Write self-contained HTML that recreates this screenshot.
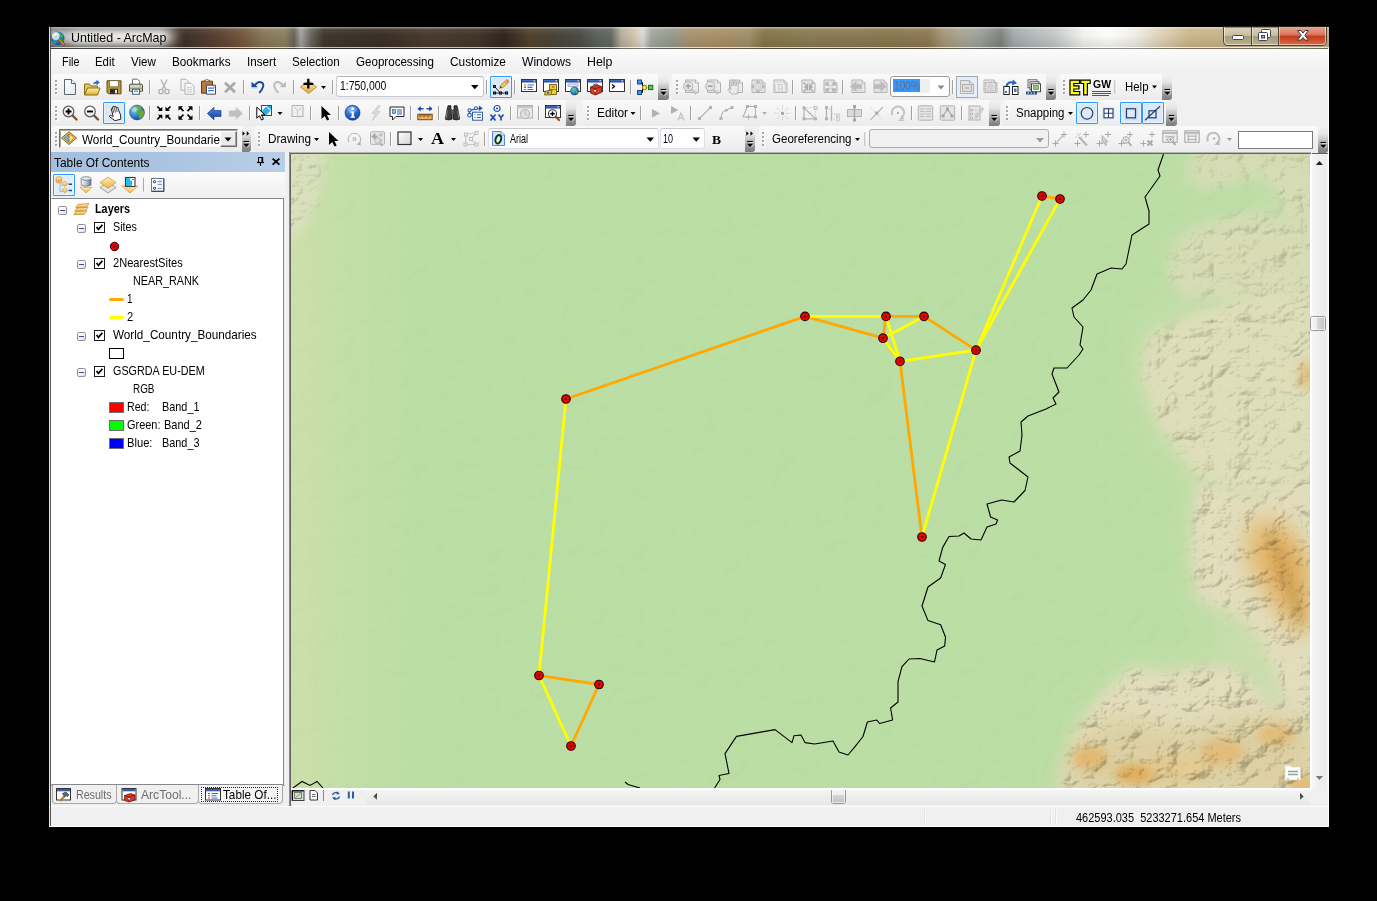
<!DOCTYPE html>
<html><head><meta charset="utf-8"><title>Untitled - ArcMap</title>
<style>
html,body{margin:0;padding:0;background:#000;}
body{width:1377px;height:901px;position:relative;overflow:hidden;font-family:"Liberation Sans",sans-serif;font-size:12px;color:#000;}
.a{position:absolute;}
.t{position:absolute;white-space:pre;transform-origin:0 0;line-height:1;}
svg{position:absolute;overflow:visible;}

</style></head>
<body>
<div class="a" style="left:49px;top:27px;width:1280px;height:800px;background:#f0f0f0;"></div>
<div class="a" style="left:49px;top:27px;width:1px;height:800px;background:#e8e8e8;z-index:5;"></div><div class="a" style="left:50px;top:27px;width:1px;height:799px;background:#555;z-index:5;"></div>
<div class="a" style="left:1328px;top:48px;width:1px;height:779px;background:#fff;z-index:5;"></div><div class="a" style="left:49px;top:826px;width:1280px;height:1px;background:#fff;z-index:5;"></div>
<div class="a" style="left:49px;top:27px;width:1280px;height:22px;overflow:hidden;background:linear-gradient(90deg,#1c1a18 0px,#2a2622 8px,#3a332c 60px,#3c3128 135px,#5a4232 168px,#74563c 192px,#8a7858 215px,#8c8060 236px,#6a6458 245px,#a4a4a0 252px,#6a665c 262px,#40382e 275px,#3a3026 330px,#4a3c2e 380px,#42362a 430px,#30261e 455px,#54422c 480px,#4a4438 505px,#4c4c46 530px,#5c625e 548px,#626862 562px,#b4ae9a 572px,#d2c6ac 585px,#dcdcd6 594px,#a2a8a0 602px,#98998c 625px,#a89470 640px,#aa9068 670px,#a09068 700px,#86764a 715px,#8a7c54 760px,#8c7a52 800px,#8a7850 840px,#8e7a54 880px,#a89878 895px,#a8a698 915px,#a0a29a 930px,#7e8480 952px,#a4acac 965px,#b4bcbc 985px,#c4c8c6 1005px,#f2f2ee 1035px,#fcfcfa 1060px,#f0eee6 1085px,#e0d4b8 1110px,#ccb88c 1140px,#c8b48a 1175px,#d0c4a0 1230px,#b8b090 1280px);">
<div class="a" style="left:0;top:0;width:1280px;height:22px;z-index:2;background:linear-gradient(180deg,rgba(255,255,255,.4) 0,rgba(255,255,255,.4) 1px,rgba(255,255,255,.08) 2px,rgba(0,0,0,0) 8px,rgba(0,0,0,.10) 20px,rgba(255,255,255,.7) 20px,rgba(255,255,255,.7) 21px,rgba(30,30,30,.5) 21px,rgba(30,30,30,.5) 22px);"></div>
<div class="a" style="left:-8px;top:1px;width:134px;height:18px;background:#fff;border-radius:9px;filter:blur(6px);opacity:.8;"></div>
<div class="a" style="left:21px;top:5px;width:96px;height:12px;background:#fff;border-radius:6px;filter:blur(3px);opacity:.7;"></div></div>
<svg style="left:50px;top:29px;z-index:3" width="17" height="18" viewBox="0 0 17 18">
<defs><radialGradient id="gl" cx=".4" cy=".35" r=".75"><stop offset="0" stop-color="#6cc4f0"/><stop offset=".55" stop-color="#1e78c4"/><stop offset="1" stop-color="#0a3c7c"/></radialGradient>
<radialGradient id="gl2" cx=".4" cy=".35" r=".7"><stop offset="0" stop-color="#f4fcff"/><stop offset="1" stop-color="#9cd8f4"/></radialGradient></defs>
<circle cx="7.600" cy="9.400" r="6.900" fill="url(#gl)"/>
<path d="M9 3.500 Q12 4 13.500 7 Q13 9 11.500 9 Q10 8 10 6 Q8.500 5 9 3.500Z M9.500 10 Q12 9.500 13.800 11 Q13 14 10.500 15.500 Q9.500 13 9.500 10Z M3 12.500 Q5 12 6 13.500 Q5.500 15.500 4 15Z" fill="#3cae38"/>
<path d="M8.300 9.700 L13.800 15.400" stroke="#6a3c10" stroke-width="2.600" stroke-linecap="round"/><path d="M8.500 9.900 L13.700 15.300" stroke="#e08a34" stroke-width="1.500" stroke-linecap="round"/>
<circle cx="5.800" cy="7" r="3.500" fill="url(#gl2)" stroke="#e8e8e8" stroke-width="1.300"/>
<circle cx="5.800" cy="7" r="4.200" fill="none" stroke="#56606c" stroke-width=".5"/>
<path d="M4 8 Q5.500 8.500 7 7" stroke="#7cd060" stroke-width="1" fill="none" opacity=".8"/>
</svg>
<span class="t" style="left:70.5px;top:31.70px;font-size:12.4px;transform:scaleX(1.0042);z-index:3;">Untitled - ArcMap</span>
<svg style="left:1222px;top:27px;z-index:3" width="106" height="20" viewBox="0 0 106 20">
<defs>
<linearGradient id="cb1" x1="0" y1="0" x2="0" y2="1"><stop offset="0" stop-color="#ddd6c0"/><stop offset=".48" stop-color="#c6bc9e"/><stop offset=".5" stop-color="#a89c78"/><stop offset="1" stop-color="#b8b090"/></linearGradient>
<linearGradient id="cb2" x1="0" y1="0" x2="0" y2="1"><stop offset="0" stop-color="#e9a890"/><stop offset=".45" stop-color="#d8735a"/><stop offset=".5" stop-color="#c4391c"/><stop offset="1" stop-color="#d86a40"/></linearGradient>
</defs>
<path d="M1.5 0 H104.5 V14.5 Q104.5 18.5 100.5 18.5 H5.5 Q1.5 18.5 1.5 14.5 Z" fill="url(#cb1)" stroke="#4a4436" stroke-width="1"/>
<path d="M57 0 H104 V14.5 Q104 18 100.5 18 H57 Z" fill="url(#cb2)"/>
<path d="M2.5 0 V14.5 Q2.5 17.5 5.5 17.5 H100.5 Q103.5 17.5 103.5 14.5 V0" fill="none" stroke="rgba(255,255,255,.55)" stroke-width="1"/>
<path d="M29.5 0 V18 M56.5 0 V18" stroke="#4a4436" stroke-width="1"/>
<path d="M30.5 0 V17 M57.5 0 V17" stroke="rgba(255,255,255,.45)" stroke-width="1"/>
<rect x="10.5" y="8.5" width="11" height="4" rx="1" fill="#fff" stroke="#3e4458" stroke-width="1"/>
<g fill="none" stroke="#3e4458" stroke-width="1"><rect x="39.5" y="2.5" width="9" height="8" rx="1" fill="#fff"/><rect x="36.5" y="5.5" width="9" height="8" rx="1" fill="#fff"/><rect x="39.5" y="8.5" width="3" height="2.500" fill="#b0a88c"/></g>
<path d="M75.500 3.500 h3.500 l2 2.600 l2-2.600 h3.500 l-3.700 4.800 l3.700 4.800 h-3.500 l-2-2.600 l-2 2.600 h-3.500 l3.700-4.800 z" fill="#fff" stroke="#3e3a4a" stroke-width="1" stroke-linejoin="round"/>
</svg>
<div class="a" style="left:51px;top:49px;width:1277px;height:24px;background:linear-gradient(180deg,#fbfbfb 0,#f5f5f5 50%,#f0f0f0 100%);"></div>
<span class="t" style="left:61.5px;top:55.67px;font-size:12.2px;transform:scaleX(0.8902);">File</span>
<span class="t" style="left:95.3px;top:55.67px;font-size:12.2px;transform:scaleX(0.9371);">Edit</span>
<span class="t" style="left:131px;top:55.67px;font-size:12.2px;transform:scaleX(0.9534);">View</span>
<span class="t" style="left:172.4px;top:55.67px;font-size:12.2px;transform:scaleX(0.9604);">Bookmarks</span>
<span class="t" style="left:246.7px;top:55.67px;font-size:12.2px;transform:scaleX(0.9603);">Insert</span>
<span class="t" style="left:292.3px;top:55.67px;font-size:12.2px;transform:scaleX(0.9504);">Selection</span>
<span class="t" style="left:356px;top:55.67px;font-size:12.2px;transform:scaleX(0.9505);">Geoprocessing</span>
<span class="t" style="left:450px;top:55.67px;font-size:12.2px;transform:scaleX(0.9717);">Customize</span>
<span class="t" style="left:522px;top:55.67px;font-size:12.2px;transform:scaleX(0.9901);">Windows</span>
<span class="t" style="left:586.5px;top:55.67px;font-size:12.2px;transform:scaleX(1.0163);">Help</span>
<div class="a" style="left:52px;top:74px;width:616px;height:25.5px;border-radius:3px;background:linear-gradient(180deg,#fafafa 0,#f4f4f4 45%,#ebebeb 100%);"></div>
<div class="a" style="left:672px;top:74px;width:384px;height:25.5px;border-radius:3px;background:linear-gradient(180deg,#fafafa 0,#f4f4f4 45%,#ebebeb 100%);"></div>
<div class="a" style="left:1060px;top:74px;width:112px;height:25.5px;border-radius:3px;background:linear-gradient(180deg,#fafafa 0,#f4f4f4 45%,#ebebeb 100%);"></div>
<div class="a" style="left:52px;top:100px;width:524px;height:25.5px;border-radius:3px;background:linear-gradient(180deg,#fafafa 0,#f4f4f4 45%,#ebebeb 100%);"></div>
<div class="a" style="left:583px;top:100px;width:416px;height:25.5px;border-radius:3px;background:linear-gradient(180deg,#fafafa 0,#f4f4f4 45%,#ebebeb 100%);"></div>
<div class="a" style="left:1003px;top:100px;width:173px;height:25.5px;border-radius:3px;background:linear-gradient(180deg,#fafafa 0,#f4f4f4 45%,#ebebeb 100%);"></div>
<div class="a" style="left:52px;top:126px;width:198px;height:26px;border-radius:3px;background:linear-gradient(180deg,#fafafa 0,#f4f4f4 45%,#ebebeb 100%);"></div>
<div class="a" style="left:254px;top:126px;width:501px;height:26px;border-radius:3px;background:linear-gradient(180deg,#fafafa 0,#f4f4f4 45%,#ebebeb 100%);"></div>
<div class="a" style="left:759px;top:126px;width:570px;height:26px;border-radius:3px;background:linear-gradient(180deg,#fafafa 0,#f4f4f4 45%,#ebebeb 100%);"></div>
<div class="a" style="left:336px;top:76px;width:146px;height:19px;background:#fff;border:1px solid #c8ccd2;border-top-color:#b4b8be;border-radius:3px;"></div>
<span class="t" style="left:339.7px;top:80.34px;font-size:12px;transform:scaleX(0.8673);">1:750,000</span>
<div class="a" style="left:490px;top:76px;width:20px;height:20px;border:1px solid #3399ff;background:#dbe9f7;border-radius:1px;box-shadow:inset 0 0 0 1px #e8f1fb;"></div>
<div class="a" style="left:658px;top:74px;width:10.5px;height:26px;border-radius:0 3px 3px 0;background:linear-gradient(180deg,#f2f2f2 0,#e6e6e6 30%,#b4b4b4 62%,#8c8c8c 85%,#7c7c7c 100%);"></div>
<div class="a" style="left:890px;top:76px;width:58px;height:19px;background:#fff;border:1px solid #9c9c9c;border-radius:3px;"></div>
<div class="a" style="left:893px;top:79px;width:27px;height:13px;background:#3399ff;"></div><div class="a" style="left:920px;top:79px;width:10px;height:14px;background:#efefef;"></div>
<span class="t" style="left:893.5px;top:80.34px;font-size:12px;color:#686c74;transform:scaleX(0.8471);">100%</span>
<div class="a" style="left:956px;top:76px;width:20px;height:20px;border:1px solid #a4a8ae;background:#e4eef9;border-radius:0;"></div>
<div class="a" style="left:1045.5px;top:74px;width:10.5px;height:26px;border-radius:0 3px 3px 0;background:linear-gradient(180deg,#f2f2f2 0,#e6e6e6 30%,#b4b4b4 62%,#8c8c8c 85%,#7c7c7c 100%);"></div>
<span class="t" style="left:1092.5px;top:79.27px;font-size:11.5px;font-weight:bold;transform:scaleX(0.9091);">GW</span>
<span class="t" style="left:1125px;top:80.84px;font-size:12px;transform:scaleX(0.9522);">Help</span>
<div class="a" style="left:1162px;top:74px;width:10px;height:26px;border-radius:0 3px 3px 0;background:linear-gradient(180deg,#f2f2f2 0,#e6e6e6 30%,#b4b4b4 62%,#8c8c8c 85%,#7c7c7c 100%);"></div>
<div class="a" style="left:103px;top:102px;width:20px;height:20px;border:1px solid #3399ff;background:#dbe9f7;border-radius:1px;box-shadow:inset 0 0 0 1px #e8f1fb;"></div>
<div class="a" style="left:565.5px;top:100px;width:10.5px;height:26px;border-radius:0 3px 3px 0;background:linear-gradient(180deg,#f2f2f2 0,#e6e6e6 30%,#b4b4b4 62%,#8c8c8c 85%,#7c7c7c 100%);"></div>
<span class="t" style="left:596.5px;top:106.84px;font-size:12px;transform:scaleX(0.9889);">Editor</span>
<div class="a" style="left:988.5px;top:100px;width:11.0px;height:26px;border-radius:0 3px 3px 0;background:linear-gradient(180deg,#f2f2f2 0,#e6e6e6 30%,#b4b4b4 62%,#8c8c8c 85%,#7c7c7c 100%);"></div>
<span class="t" style="left:1015.5px;top:106.84px;font-size:12px;transform:scaleX(0.9564);">Snapping</span>
<div class="a" style="left:1076px;top:102px;width:20px;height:20px;border:1px solid #3399ff;background:#dbe9f7;border-radius:1px;box-shadow:inset 0 0 0 1px #e8f1fb;"></div>
<div class="a" style="left:1120px;top:102px;width:20px;height:20px;border:1px solid #3399ff;background:#dbe9f7;border-radius:1px;box-shadow:inset 0 0 0 1px #e8f1fb;"></div>
<div class="a" style="left:1141.5px;top:102px;width:20.5px;height:20px;border:1px solid #3399ff;background:#dbe9f7;border-radius:1px;box-shadow:inset 0 0 0 1px #e8f1fb;"></div>
<div class="a" style="left:1166px;top:100px;width:10.5px;height:26px;border-radius:0 3px 3px 0;background:linear-gradient(180deg,#f2f2f2 0,#e6e6e6 30%,#b4b4b4 62%,#8c8c8c 85%,#7c7c7c 100%);"></div>
<div class="a" style="left:59px;top:129px;width:177px;height:17px;background:#fff;border:1px solid;border-color:#6e6e6e #e8e8e8 #e8e8e8 #6e6e6e;box-shadow:inset 1px 1px 0 #a8a8a8;"></div>
<span class="t" style="left:81.5px;top:133.84px;font-size:12px;transform:scaleX(0.9774);">World_Country_Boundarie</span>
<div class="a" style="left:220px;top:131px;width:15px;height:14px;background:#ececec;border:1px solid;border-color:#fff #6e6e6e #6e6e6e #fff;box-shadow:inset -1px -1px 0 #a4a4a4;"></div>
<div class="a" style="left:241.5px;top:126px;width:9.0px;height:26px;border-radius:0 3px 3px 0;background:linear-gradient(180deg,#f2f2f2 0,#e6e6e6 30%,#b4b4b4 62%,#8c8c8c 85%,#7c7c7c 100%);"></div>
<span class="t" style="left:267.5px;top:133.14px;font-size:12px;transform:scaleX(0.9769);">Drawing</span>
<span class="t" style="left:431px;top:129.69px;font-size:17.5px;font-family:'Liberation Serif',serif;font-weight:bold;transform:scaleX(1.0286);">A</span>
<div class="a" style="left:488px;top:128px;width:169px;height:19px;background:#fff;border:1px solid #dcdfe4;border-top-color:#c4c8ce;border-radius:3px;"></div>
<span class="t" style="left:509.5px;top:133.34px;font-size:12px;transform:scaleX(0.7498);">Arial</span>
<div class="a" style="left:660px;top:128px;width:43px;height:19px;background:#fff;border:1px solid #dcdfe4;border-top-color:#c4c8ce;border-radius:3px;"></div>
<span class="t" style="left:663px;top:133.34px;font-size:12px;transform:scaleX(0.7492);">10</span>
<span class="t" style="left:712px;top:132.50px;font-size:13px;font-family:'Liberation Serif',serif;font-weight:bold;transform:scaleX(1.0379);">B</span>
<div class="a" style="left:744.5px;top:126px;width:10.5px;height:26px;border-radius:0 3px 3px 0;background:linear-gradient(180deg,#f2f2f2 0,#e6e6e6 30%,#b4b4b4 62%,#8c8c8c 85%,#7c7c7c 100%);"></div>
<span class="t" style="left:771.5px;top:132.84px;font-size:12px;transform:scaleX(0.9611);">Georeferencing</span>
<div class="a" style="left:869px;top:129px;width:178px;height:17px;background:#f0f0f0;border:1px solid #adadad;border-radius:3px;"></div>
<div class="a" style="left:1238px;top:131px;width:73px;height:16px;background:#fff;border:1px solid #7a7a7a;"></div>
<div class="a" style="left:1318px;top:126px;width:10px;height:27px;border-radius:0 3px 3px 0;background:linear-gradient(180deg,#f2f2f2 0,#e6e6e6 30%,#b4b4b4 62%,#8c8c8c 85%,#7c7c7c 100%);"></div>
<svg style="left:0;top:0" width="1377" height="160" viewBox="0 0 1377 160"><defs>
<linearGradient id="gpage" x1="0" y1="0" x2="1" y2="1"><stop offset="0" stop-color="#fff"/><stop offset="1" stop-color="#dfeaf6"/></linearGradient>
<linearGradient id="gfold" x1="0" y1="0" x2="0" y2="1"><stop offset="0" stop-color="#fff1a8"/><stop offset="1" stop-color="#d9b13a"/></linearGradient>
<linearGradient id="gor" x1="0" y1="0" x2="0" y2="1"><stop offset="0" stop-color="#fff0b8"/><stop offset="1" stop-color="#e9a53c"/></linearGradient>
<radialGradient id="gglobe" cx=".35" cy=".3" r=".8"><stop offset="0" stop-color="#8fd6f8"/><stop offset=".55" stop-color="#2a86cc"/><stop offset="1" stop-color="#0d3f7c"/></radialGradient>
<radialGradient id="ginfo" cx=".4" cy=".3" r=".8"><stop offset="0" stop-color="#6aa8f0"/><stop offset=".6" stop-color="#1f5fcc"/><stop offset="1" stop-color="#0e3a96"/></radialGradient>
<linearGradient id="gwin" x1="0" y1="0" x2="0" y2="1"><stop offset="0" stop-color="#4a72c8"/><stop offset="1" stop-color="#23408e"/></linearGradient>
<linearGradient id="gblue" x1="0" y1="0" x2="0" y2="1"><stop offset="0" stop-color="#4f8fe8"/><stop offset="1" stop-color="#103c9c"/></linearGradient>
<linearGradient id="grect" x1="0" y1="0" x2="1" y2="1"><stop offset="0" stop-color="#fff"/><stop offset="1" stop-color="#d4d4d4"/></linearGradient>
<linearGradient id="glens" x1="0" y1="0" x2="0" y2="1"><stop offset="0" stop-color="#fff"/><stop offset="1" stop-color="#e6e6e6"/></linearGradient>
</defs><rect x="56" y="81" width="2" height="2" fill="#fff"/><rect x="55" y="80" width="2" height="2" fill="#a6a6a6"/>
<rect x="56" y="85" width="2" height="2" fill="#fff"/><rect x="55" y="84" width="2" height="2" fill="#a6a6a6"/>
<rect x="56" y="89" width="2" height="2" fill="#fff"/><rect x="55" y="88" width="2" height="2" fill="#a6a6a6"/>
<rect x="56" y="93" width="2" height="2" fill="#fff"/><rect x="55" y="92" width="2" height="2" fill="#a6a6a6"/>
<g transform="translate(62 79)"><path d="M2.500 .5 H9.500 L13.500 4.500 V15.500 H2.500Z" fill="url(#gpage)" stroke="#5c6670" stroke-width="1"/><path d="M9.500 .5 V4.500 H13.500" fill="#f4f8fc" stroke="#5c6670" stroke-width="1"/></g>
<g transform="translate(84 79.5)"><path d="M.5 15 V4.500 H5.500 L7 6.500 H13.500 V15Z" fill="#e6c65a" stroke="#8a6d14" stroke-width="1"/><path d="M.5 15.500 L3.500 8.500 H16 L13.500 15.500Z" fill="url(#gfold)" stroke="#8a6d14" stroke-width="1"/><path d="M9 5 Q9.500 2 12.500 2 V.3 L15.800 3 L12.500 5.700 V4 Q10.500 4 9 5Z" fill="#2a62c0"/></g>
<g transform="translate(106 79.3)"><path d="M1 1.500 H15 V14.500 H2.500 L1 13Z" fill="#b8983a" stroke="#5c4a10" stroke-width="1"/><rect x="3.500" y="1.500" width="9" height="6" fill="#fdfdfd" stroke="#5c4a10" stroke-width=".6"/><rect x="4" y="9.500" width="8" height="5" fill="#2a2a2a"/><rect x="9" y="10.500" width="2" height="3.500" fill="#e8e8e8"/></g>
<g transform="translate(128 78.7)"><path d="M4.500 6 V.5 H9.500 L11.500 2.500 V6" fill="#fff" stroke="#6a7078" stroke-width="1"/><path d="M1.500 6.500 Q1.500 5.500 3 5.500 H13 Q14.500 5.500 14.500 6.500 V12.500 H1.500Z" fill="#d8d8c8" stroke="#4a4a3a" stroke-width="1"/><path d="M1.500 9.500 H14.500" stroke="#8a8a70" stroke-width="1"/><rect x="4.500" y="10.500" width="7" height="5" fill="#fff" stroke="#4a5a6a" stroke-width="1"/><path d="M6 12.500 H10" stroke="#3a82d8" stroke-width="1.200"/><rect x="11.500" y="7" width="1.500" height="1" fill="#4c4"/></g>
<path d="M149.5 80 V94" stroke="#a0a0a0" stroke-width="1"/><path d="M150.5 80 V94" stroke="#fcfcfc" stroke-width="1"/>
<g transform="translate(156 79)"><path d="M5 .5 L9.500 10 M11 .5 L6.500 10" stroke="#b2b2b2" stroke-width="1.400" fill="none"/><circle cx="5" cy="12.500" r="2.200" fill="none" stroke="#b2b2b2" stroke-width="1.300"/><circle cx="11" cy="12.500" r="2.200" fill="none" stroke="#b2b2b2" stroke-width="1.300"/></g>
<g transform="translate(179.5 78.7)"><path d="M1.500 .5 H6.500 L9.500 3.500 V11.500 H1.500Z" fill="#f4f4f4" stroke="#b2b2b2" stroke-width="1"/><path d="M5.500 4.500 H11.500 L14.500 7.500 V15.500 H5.500Z" fill="#f7f7f7" stroke="#b2b2b2" stroke-width="1"/><path d="M7.500 9 h5 M7.500 11 h5 M7.500 13 h5" stroke="#c8c8c8" stroke-width="1"/></g>
<g transform="translate(200 78.7)"><path d="M1.500 2.500 H12.500 V14.500 H1.500Z" fill="#c07830" stroke="#6a3c10" stroke-width="1"/><path d="M4.500 3 V1.500 H6 Q7 -.5 8 1.500 H9.500 V3Z" fill="#d8d8d8" stroke="#555" stroke-width=".8"/><path d="M6.500 6.500 H15.500 V15.500 H6.500Z" fill="#fff" stroke="#3a4a6a" stroke-width="1"/><path d="M8 9.500 H14 M8 12 H14" stroke="#3a7ad0" stroke-width="1.300"/><path d="M12.500 6.500 L15.500 9.500" stroke="#3a4a6a" stroke-width=".5"/></g>
<g transform="translate(222.5 79.3)"><path d="M2.500 3.500 L12.500 13 M12.500 3.500 L2.500 13" stroke="#a8a8a8" stroke-width="2.600"/></g>
<path d="M243.5 80 V94" stroke="#a0a0a0" stroke-width="1"/><path d="M244.5 80 V94" stroke="#fcfcfc" stroke-width="1"/>
<g transform="translate(250 79)"><path d="M5 6.300 Q8 1.600 12 3.600 Q15.500 6.500 9.700 13.300" fill="none" stroke="#1a4a9e" stroke-width="1.900" stroke-linecap="round"/><path d="M1.500 2.800 V8.300 H8Z" fill="#1a4a9e"/><path d="M1 9.300 h7" stroke="#c8d4e8" stroke-width=".8"/></g>
<g transform="translate(271.5 79)"><path d="M11 6.300 Q8 1.600 4 3.600 Q.5 6.500 6.300 13.300" fill="none" stroke="#bcbcbc" stroke-width="1.900" stroke-linecap="round"/><path d="M14.500 2.800 V8.300 H8Z" fill="#bcbcbc"/></g>
<path d="M293.5 80 V94" stroke="#a0a0a0" stroke-width="1"/><path d="M294.5 80 V94" stroke="#fcfcfc" stroke-width="1"/>
<g transform="translate(300.5 78.7)"><path d="M8 2 L16 8.300 L8 14.800 L0 8.300Z" fill="url(#gor)" stroke="#b48428" stroke-width=".9"/><path d="M7.800 0 V9.800 M3 5.200 H12.800" stroke="#000" stroke-width="2.300"/></g>
<path d="M321 86 h5 l-2.5 3.0z" fill="#000"/>
<path d="M332.5 80 V94" stroke="#a0a0a0" stroke-width="1"/><path d="M333.5 80 V94" stroke="#fcfcfc" stroke-width="1"/>
<path d="M471 85 h7.5 l-3.75 4.25z" fill="#000"/>
<path d="M486.5 80 V94" stroke="#a0a0a0" stroke-width="1"/><path d="M487.5 80 V94" stroke="#fcfcfc" stroke-width="1"/>
<g transform="translate(493 79)"><path d="M1.500 7.500 L7.500 14 M1.500 14 H13.500" stroke="#222" stroke-width="1" fill="none"/><g fill="#000"><rect x="0" y="6" width="3" height="3"/><rect x="0" y="12.500" width="3" height="3"/><rect x="6" y="12.500" width="3" height="3"/><rect x="12" y="12.500" width="3" height="3"/></g><g fill="#888"><rect x="1" y="7" width="1" height="1"/><rect x="1" y="13.500" width="1" height="1"/><rect x="7" y="13.500" width="1" height="1"/><rect x="13" y="13.500" width="1" height="1"/></g><path d="M6.700 9.300 L8 5.800 L13.500 .8 L16 3 L10.300 8.300Z" fill="#f4c838" stroke="#a87018" stroke-width=".6"/><path d="M12.800 1.400 L13.800 .5 Q15.500 .2 16.300 2.600 L15.400 3.600Z" fill="#e87888"/><path d="M11.800 2.300 L14.500 4.600" stroke="#9a9a9a" stroke-width="1.100"/><path d="M6.700 9.300 L7.600 6.900 L9 8.400Z" fill="#333"/></g>
<path d="M514.5 80 V94" stroke="#a0a0a0" stroke-width="1"/><path d="M515.5 80 V94" stroke="#fcfcfc" stroke-width="1"/>
<g transform="translate(521 79)"><rect x=".5" y=".5" width="15" height="12" fill="#fff" stroke="#333" stroke-width="1"/><rect x="1" y="1" width="14" height="2.500" fill="url(#gwin)"/><rect x="12.500" y="1.300" width="1.500" height="1.200" fill="#fff" opacity=".8"/><path d="M3 6 h2 M3 8.300 h2 M3 10.500 h2" stroke="#d04030" stroke-width="1.200"/><path d="M6.500 6 h6.500 M6.500 8.300 h5 M6.500 10.500 h6" stroke="#3a6ad0" stroke-width="1.200"/><path d="M3 10.500 h2" stroke="#3a3" stroke-width="1.200"/></g>
<g transform="translate(543 79)"><rect x=".5" y=".5" width="15" height="12" fill="#fff" stroke="#333" stroke-width="1"/><rect x="1" y="1" width="14" height="2.500" fill="url(#gwin)"/><rect x="12.500" y="1.300" width="1.500" height="1.200" fill="#fff" opacity=".8"/><path d="M6.500 5.500 H13.500 V15.500 H6.500Z" fill="#f2d040" stroke="#7a6410" stroke-width="1"/><path d="M6.500 10.500 H13.500" stroke="#7a6410" stroke-width=".8"/><rect x="8.800" y="7.300" width="2.500" height="1.200" fill="#7a6410"/><path d="M2.500 12 L9 11 L8 15.800 L1.500 16Z" fill="#e8c030" stroke="#6a5408" stroke-width=".8"/><circle cx="5" cy="13.800" r="1.300" fill="#2a7ad0"/></g>
<g transform="translate(565 79)"><rect x=".5" y=".5" width="15" height="12" fill="#fff" stroke="#333" stroke-width="1"/><rect x="1" y="1" width="14" height="2.500" fill="url(#gwin)"/><rect x="12.500" y="1.300" width="1.500" height="1.200" fill="#fff" opacity=".8"/><rect x="3" y="5" width="10" height="2.500" fill="#dde6f4" stroke="#8898b8" stroke-width=".7"/><circle cx="9.500" cy="12" r="4" fill="url(#gglobe)" stroke="#0c3a70" stroke-width=".5"/><path d="M7 10.500 Q9 9 10 10.500 Q9.500 12.500 8 13 Q7 12 7 10.500Z M11 12 Q12.500 11.500 12.800 13 Q12 14.800 11 14.500Z" fill="#5ac040"/></g>
<g transform="translate(587 79)"><rect x=".5" y=".5" width="15" height="12" fill="#fff" stroke="#333" stroke-width="1"/><rect x="1" y="1" width="14" height="2.500" fill="url(#gwin)"/><rect x="12.500" y="1.300" width="1.500" height="1.200" fill="#fff" opacity=".8"/><path d="M3.500 8 L10 6 L14.500 7.500 V13.500 L8 16 L3.500 14Z" fill="#d03828" stroke="#6a1408" stroke-width=".8"/><path d="M3.500 8 L8 9.800 L14.500 7.500 M8 9.800 V16" stroke="#6a1408" stroke-width=".7" fill="none"/><path d="M6 6.800 Q7.500 4 11 5.500" stroke="#555" stroke-width="1.100" fill="none"/><rect x="7" y="11" width="2" height="1.500" fill="#ddd"/></g>
<g transform="translate(609 79)"><rect x=".5" y=".5" width="15" height="12" fill="#fff" stroke="#333" stroke-width="1"/><rect x="1" y="1" width="14" height="2.500" fill="url(#gwin)"/><rect x="12.500" y="1.300" width="1.500" height="1.200" fill="#fff" opacity=".8"/><path d="M3 5.500 L5.500 7.500 L3 9.500" stroke="#000" stroke-width="1.200" fill="none"/></g>
<path d="M630.5 80 V94" stroke="#a0a0a0" stroke-width="1"/><path d="M631.5 80 V94" stroke="#fcfcfc" stroke-width="1"/>
<g transform="translate(637 79.5)"><path d="M2.500 3 H5.500 V8 H10 M2.500 13 H5.500 V8" stroke="#000" stroke-width="1" fill="none"/><rect x=".5" y=".5" width="4" height="4" fill="#3a9af0" stroke="#134c9c" stroke-width="1"/><rect x=".5" y="11" width="4" height="4" fill="#3a9af0" stroke="#134c9c" stroke-width="1"/><circle cx="7.500" cy="8" r="2.300" fill="#f8e060" stroke="#8a7410" stroke-width="1"/><rect x="11.500" y="5.800" width="4.300" height="4.300" fill="#58c848" stroke="#1c6c14" stroke-width="1"/></g>
<path d="M660.75 89.5 h5.500" stroke="#000" stroke-width="1.100"/><path d="M660.55 91.7 h6 l-3 3.300z" fill="#000"/><path d="M661.75 90.5 h5.500 M664.55 95.5 l2.500 -3" stroke="#fff" stroke-width=".7" opacity=".75"/>
<rect x="677" y="81" width="2" height="2" fill="#fff"/><rect x="676" y="80" width="2" height="2" fill="#a6a6a6"/>
<rect x="677" y="85" width="2" height="2" fill="#fff"/><rect x="676" y="84" width="2" height="2" fill="#a6a6a6"/>
<rect x="677" y="89" width="2" height="2" fill="#fff"/><rect x="676" y="88" width="2" height="2" fill="#a6a6a6"/>
<rect x="677" y="93" width="2" height="2" fill="#fff"/><rect x="676" y="92" width="2" height="2" fill="#a6a6a6"/>
<g transform="translate(683 79)"><path d="M2.500 1 H12.500 L15.500 4 V13.500 H2.500Z" fill="#ececec" stroke="#b2b2b2" stroke-width="1"/><path d="M12.500 1 V4 H15.500" fill="#f6f6f6" stroke="#b2b2b2" stroke-width="1"/><path d="M4 3 H11 M4 11.800 H14" stroke="#d4d4d4" stroke-width="1"/><path d="M8.500 10.500 L12.500 14.500" stroke="#c4c4c4" stroke-width="2.200" stroke-linecap="round"/><circle cx="5.200" cy="7.200" r="4.600" fill="#e6e6e6" stroke="#b2b2b2" stroke-width="1"/><path d="M2.700 7.200 h5 M5.200 4.700 v5" stroke="#a4a4a4" stroke-width="1.800"/></g>
<g transform="translate(705 79)"><path d="M2.500 1 H12.500 L15.500 4 V13.500 H2.500Z" fill="#ececec" stroke="#b2b2b2" stroke-width="1"/><path d="M12.500 1 V4 H15.500" fill="#f6f6f6" stroke="#b2b2b2" stroke-width="1"/><path d="M4 3 H11 M4 11.800 H14" stroke="#d4d4d4" stroke-width="1"/><path d="M8.500 10.500 L12.500 14.500" stroke="#c4c4c4" stroke-width="2.200" stroke-linecap="round"/><circle cx="5.200" cy="7.200" r="4.600" fill="#e6e6e6" stroke="#b2b2b2" stroke-width="1"/><path d="M2.700 7.200 h5" stroke="#a4a4a4" stroke-width="1.800"/></g>
<g transform="translate(727 79)"><path d="M2.500 1 H12.500 L15.500 4 V13.500 H2.500Z" fill="#ececec" stroke="#b2b2b2" stroke-width="1"/><path d="M12.500 1 V4 H15.500" fill="#f6f6f6" stroke="#b2b2b2" stroke-width="1"/><path d="M4 3 H11 M4 11.800 H14" stroke="#d4d4d4" stroke-width="1"/><path d="M4.500 15 L.8 10.300 L2 9.300 L4 10.800 L2.500 3.800 L3.800 3.400 L5 7 L4.800 1.800 L6.200 1.700 L7 6.500 L7.500 1.500 L9 1.600 L9 6.800 L10.300 2.800 L11.500 3.200 L11 11 L10.500 15Z" fill="#eaeaea" stroke="#b2b2b2" stroke-width=".9" stroke-linejoin="round"/></g>
<g transform="translate(749.5 79)"><path d="M2.500 1 H12.500 L15.500 4 V13.500 H2.500Z" fill="#ececec" stroke="#b2b2b2" stroke-width="1"/><path d="M12.500 1 V4 H15.500" fill="#f6f6f6" stroke="#b2b2b2" stroke-width="1"/><path d="M4 3 H11 M4 11.800 H14" stroke="#d4d4d4" stroke-width="1"/><rect x="5.500" y="4.500" width="6" height="6" fill="#dcdcdc" stroke="#c8c8c8" stroke-width=".8"/><path d="M8.500 .8 L11 3.800 H6Z M8.500 14.800 L11 11.500 H6Z M1.200 7.500 L4.500 5 V10Z M15.800 7.500 L12.500 5 V10Z" fill="#b4b4b4"/></g>
<g transform="translate(771.5 79)"><path d="M2.500 1 H12.500 L15.500 4 V13.500 H2.500Z" fill="#ececec" stroke="#b2b2b2" stroke-width="1"/><path d="M12.500 1 V4 H15.500" fill="#f6f6f6" stroke="#b2b2b2" stroke-width="1"/><path d="M4 3 H11 M4 11.800 H14" stroke="#d4d4d4" stroke-width="1"/><rect x="3.500" y="5" width="11" height="7.500" fill="#d6d6d6"/><path d="M5.500 6 V12 M4.300 7.200 L5.500 6 M12.500 6 V12 M11.300 7.200 L12.500 6" stroke="#f8f8f8" stroke-width="1.300" fill="none"/><circle cx="9" cy="8" r=".9" fill="#f8f8f8"/><circle cx="9" cy="10.800" r=".9" fill="#f8f8f8"/></g>
<path d="M792.5 80 V94" stroke="#a0a0a0" stroke-width="1"/><path d="M793.5 80 V94" stroke="#fcfcfc" stroke-width="1"/>
<g transform="translate(799.5 79)"><path d="M2.500 1 H12.500 L15.500 4 V13.500 H2.500Z" fill="#ececec" stroke="#b2b2b2" stroke-width="1"/><path d="M12.500 1 V4 H15.500" fill="#f6f6f6" stroke="#b2b2b2" stroke-width="1"/><path d="M4 3 H11 M4 11.800 H14" stroke="#d4d4d4" stroke-width="1"/><path d="M4 3.500 L7.500 7 M14 3.500 L10.500 7 M4 12.500 L7.500 9 M14 12.500 L10.500 9" stroke="#aaa" stroke-width="1.300"/><path d="M8 4.500 V7.500 H5 M10 4.500 V7.500 H13 M8 11.500 V8.500 H5 M10 11.500 V8.500 H13" stroke="#aaa" stroke-width="1.200" fill="none"/></g>
<g transform="translate(821.5 79)"><path d="M2.500 1 H12.500 L15.500 4 V13.500 H2.500Z" fill="#ececec" stroke="#b2b2b2" stroke-width="1"/><path d="M12.500 1 V4 H15.500" fill="#f6f6f6" stroke="#b2b2b2" stroke-width="1"/><path d="M4 3 H11 M4 11.800 H14" stroke="#d4d4d4" stroke-width="1"/><path d="M5 4.500 L8 7 M13 4.500 L10 7 M5 11.500 L8 9 M13 11.500 L10 9" stroke="#aaa" stroke-width="1.300"/><path d="M4.500 7 V4 H7.500 M13.500 7 V4 H10.500 M4.500 9 V12 H7.500 M13.500 9 V12 H10.500" stroke="#aaa" stroke-width="1.200" fill="none"/></g>
<path d="M842.5 80 V94" stroke="#a0a0a0" stroke-width="1"/><path d="M843.5 80 V94" stroke="#fcfcfc" stroke-width="1"/>
<g transform="translate(849.5 79)"><path d="M2.500 1 H12.500 L15.500 4 V13.500 H2.500Z" fill="#ececec" stroke="#b2b2b2" stroke-width="1"/><path d="M12.500 1 V4 H15.500" fill="#f6f6f6" stroke="#b2b2b2" stroke-width="1"/><path d="M4 3 H11 M4 11.800 H14" stroke="#d4d4d4" stroke-width="1"/><path d="M.5 7.500 L7 2 V5 H12.500 V10 H7 V13Z" fill="#bcbcbc" stroke="#cecece" stroke-width=".6"/></g>
<g transform="translate(871.5 79)"><path d="M2.500 1 H12.500 L15.500 4 V13.500 H2.500Z" fill="#ececec" stroke="#b2b2b2" stroke-width="1"/><path d="M12.500 1 V4 H15.500" fill="#f6f6f6" stroke="#b2b2b2" stroke-width="1"/><path d="M4 3 H11 M4 11.800 H14" stroke="#d4d4d4" stroke-width="1"/><path d="M15.500 7.500 L9 2 V5 H2 V10 H9 V13Z" fill="#bcbcbc" stroke="#cecece" stroke-width=".6"/></g>
<path d="M937.5 85.5 h7 l-3.5 4.0z" fill="#8a8a8a"/>
<path d="M952.5 80 V94" stroke="#a0a0a0" stroke-width="1"/><path d="M953.5 80 V94" stroke="#fcfcfc" stroke-width="1"/>
<g transform="translate(959 79)"><path d="M1.500 1.500 H10.500 L14.500 5.500 V14.500 H1.500Z" fill="#e4e4e4" stroke="#b2b2b2" stroke-width="1"/><path d="M10.500 1.500 V5.500 H14.500" fill="none" stroke="#b2b2b2" stroke-width="1"/><rect x="3.500" y="5.500" width="9" height="7" fill="#dcdcdc" stroke="#b2b2b2" stroke-width="1"/><path d="M6 9 h4" stroke="#b2b2b2" stroke-width="1.200"/></g>
<g transform="translate(981.5 79)"><path d="M2.500 1 H12.500 L15.500 4 V13.500 H2.500Z" fill="#ececec" stroke="#b2b2b2" stroke-width="1"/><path d="M12.500 1 V4 H15.500" fill="#f6f6f6" stroke="#b2b2b2" stroke-width="1"/><path d="M4 3 H11 M4 11.800 H14" stroke="#d4d4d4" stroke-width="1"/><rect x="4" y="3.500" width="10" height="8.500" fill="#dedede" stroke="#aaa" stroke-width="1" stroke-dasharray="1.500 1"/><circle cx="9" cy="7.800" r="2.800" fill="#d2d2d2"/></g>
<g transform="translate(1003 79)"><rect x=".8" y="7.500" width="5.500" height="8" fill="#fff" stroke="#222" stroke-width="1"/><rect x="9.500" y="7.500" width="5.500" height="8" fill="#fff" stroke="#222" stroke-width="1"/><rect x="2" y="12" width="2" height="2" fill="#3a7ad0"/><rect x="11" y="9.500" width="2.500" height="3.500" fill="#3a7ad0"/><path d="M2.500 7 Q4 1.500 9.500 2.500 L9.800 .5 L14 4.200 L9 6.200 L9.300 4.500 Q5.500 3.800 4.500 7Z" fill="#2a62c0"/></g>
<g transform="translate(1025 79)"><rect x="3" y=".8" width="9" height="8" fill="#fff" stroke="#555" stroke-width=".9"/><rect x="5" y="2.800" width="9" height="8" fill="#fff" stroke="#444" stroke-width=".9"/><rect x="6.500" y="4.800" width="9" height="8" fill="#fff" stroke="#333" stroke-width=".9"/><rect x="8.500" y="6.500" width="5" height="4" fill="#8cc870" stroke="#4a7a3a" stroke-width=".6"/><rect x="1" y="12.500" width="11" height="3" fill="#2a4a8a"/><path d="M2.500 14 h1.500 m1.500 0 h1.500 m1.500 0 h1.500" stroke="#fff" stroke-width="1"/></g>
<path d="M1048.25 89.5 h5.500" stroke="#000" stroke-width="1.100"/><path d="M1048.05 91.7 h6 l-3 3.300z" fill="#000"/><path d="M1049.25 90.5 h5.500 M1052.05 95.5 l2.500 -3" stroke="#fff" stroke-width=".7" opacity=".75"/>
<rect x="1064" y="81" width="2" height="2" fill="#fff"/><rect x="1063" y="80" width="2" height="2" fill="#a6a6a6"/>
<rect x="1064" y="85" width="2" height="2" fill="#fff"/><rect x="1063" y="84" width="2" height="2" fill="#a6a6a6"/>
<rect x="1064" y="89" width="2" height="2" fill="#fff"/><rect x="1063" y="88" width="2" height="2" fill="#a6a6a6"/>
<rect x="1064" y="93" width="2" height="2" fill="#fff"/><rect x="1063" y="92" width="2" height="2" fill="#a6a6a6"/>
<g fill="#ffff00" stroke="#000" stroke-width="1.200" stroke-linejoin="miter"><path d="M1070 80.200 H1079.500 V83.500 H1073.800 V85.800 H1079 V89 H1073.800 V91.500 H1079.700 V94.800 H1070Z"/><path d="M1080.800 80.200 H1090.200 V83.500 H1087.400 V94.800 H1083.600 V83.500 H1080.800Z"/></g>
<path d="M1092 91.500 h19 M1092 93.500 h19 M1092 95.500 h17" stroke="#444" stroke-width=".9"/>
<path d="M1115 80 V94" stroke="#a0a0a0" stroke-width="1"/><path d="M1116 80 V94" stroke="#fcfcfc" stroke-width="1"/>
<path d="M1152 85.5 h5 l-2.5 3.0z" fill="#000"/>
<path d="M1164.5 89.5 h5.500" stroke="#000" stroke-width="1.100"/><path d="M1164.3 91.7 h6 l-3 3.300z" fill="#000"/><path d="M1165.5 90.5 h5.500 M1168.3 95.5 l2.500 -3" stroke="#fff" stroke-width=".7" opacity=".75"/>
<rect x="56" y="107" width="2" height="2" fill="#fff"/><rect x="55" y="106" width="2" height="2" fill="#a6a6a6"/>
<rect x="56" y="111" width="2" height="2" fill="#fff"/><rect x="55" y="110" width="2" height="2" fill="#a6a6a6"/>
<rect x="56" y="115" width="2" height="2" fill="#fff"/><rect x="55" y="114" width="2" height="2" fill="#a6a6a6"/>
<rect x="56" y="119" width="2" height="2" fill="#fff"/><rect x="55" y="118" width="2" height="2" fill="#a6a6a6"/>
<g transform="translate(62 105)"><path d="M9.500 9.500 L14.500 14.500" stroke="#8a4a28" stroke-width="2.400" stroke-linecap="round"/><circle cx="6.500" cy="6.500" r="5.300" fill="url(#glens)" stroke="#5a5a5a" stroke-width="1.200"/><path d="M3.500 6.500 h6 M6.500 3.500 v6" stroke="#000" stroke-width="1.900"/></g>
<g transform="translate(83.5 105)"><path d="M9.500 9.500 L14.500 14.500" stroke="#8a4a28" stroke-width="2.400" stroke-linecap="round"/><circle cx="6.500" cy="6.500" r="5.300" fill="url(#glens)" stroke="#5a5a5a" stroke-width="1.200"/><path d="M3.500 6.500 h6" stroke="#000" stroke-width="1.900"/></g>
<g transform="translate(107.5 104.5)"><g transform="rotate(-14 8 8)"><path d="M5.500 15.800 L1.300 10.800 Q.8 9.400 2.300 9.500 L4.800 11.300 V3.500 Q5.500 2.400 6.300 3.500 V2 Q7.200 1 8 2 V2.300 Q9 1.400 9.800 2.500 V3.500 Q10.800 2.800 11.500 3.800 V5.500 L12.300 11.500 L11.500 15.800Z" fill="#fff" stroke="#222" stroke-width=".9" stroke-linejoin="round"/><path d="M6.300 3.500 V8 M8 2.500 V8 M9.800 3.200 V8" stroke="#444" stroke-width=".8"/></g></g>
<g transform="translate(129 104.5)"><circle cx="8" cy="8" r="7.400" fill="url(#gglobe)" stroke="#1a4a80" stroke-width=".6"/><path d="M7.500 1.200 Q10 .8 12.500 2.500 Q13 4 11.500 4.500 Q12.500 6 14.800 6.500 Q15.500 9 14.500 11 Q12.500 14 10.500 14.500 Q9.500 12 10 10 Q8 9.500 7 7.500 Q7 5.500 9 4.500 Q8.500 3 7 3 Q6 2 7.500 1.200Z M3 3.500 Q4.500 2.500 5 4 Q4 5 3 3.500Z" fill="#6aa838"/><path d="M9 6 Q11 5.500 12 7 Q10.500 8 9 6Z" fill="#3a8ad0" opacity=".7"/><ellipse cx="5.500" cy="5" rx="3.500" ry="2.500" fill="#fff" opacity=".25"/></g>
<path d="M149.5 106 V120" stroke="#a0a0a0" stroke-width="1"/><path d="M150.5 106 V120" stroke="#fcfcfc" stroke-width="1"/>
<g transform="translate(156.5 105.7)"><path d="M.8 .8 L4 4 M14 .8 L10.800 4 M.8 13.800 L4 10.500 M14 13.800 L10.800 10.500" stroke="#000" stroke-width="1.700"/><path d="M5.800 5.400 V1 L1.400 5.400Z M9 5.400 V1 L13.400 5.400Z M5.800 9 V13.400 L1.400 9Z M9 9 V13.400 L13.400 9Z" fill="#000"/></g>
<g transform="translate(178 105.7)"><path d="M2 2 L5.500 5.500 M13 2 L9.500 5.500 M2 12.500 L5.500 9 M13 12.500 L9.500 9" stroke="#000" stroke-width="1.700"/><path d="M.5 .5 H5 L.5 5Z M14.500 .5 H10 L14.500 5Z M.5 14 H5 L.5 9.500Z M14.500 14 H10 L14.500 9.500Z" fill="#000"/></g>
<path d="M199.5 106 V120" stroke="#a0a0a0" stroke-width="1"/><path d="M200.5 106 V120" stroke="#fcfcfc" stroke-width="1"/>
<g transform="translate(206.5 105.5)"><path d="M.8 8 L7.500 1.800 V5 H14.500 V11 H7.500 V14.200Z" fill="url(#gblue)" stroke="#1c3f94" stroke-width=".7"/></g>
<g transform="translate(227.5 105.5)"><path d="M15.200 8 L8.500 1.800 V5 H1.500 V11 H8.500 V14.200Z" fill="#c0c0c0" stroke="#d6d6d6" stroke-width=".7"/></g>
<path d="M249.5 106 V120" stroke="#a0a0a0" stroke-width="1"/><path d="M250.5 106 V120" stroke="#fcfcfc" stroke-width="1"/>
<g transform="translate(256 104.7)"><rect x="5.500" y=".8" width="10" height="10" fill="#fff" stroke="#444" stroke-width="1"/><path d="M6 6 L10.500 1.300 H15 V5.500 L10.500 10.300 H6Z" fill="#2ab0e8"/><path d="M10 1.300 L15 6" stroke="#fff" stroke-width="1.200" opacity=".7"/><path d="M.8 2.500 V13.500 L3.500 11 L5.500 15.300 L7.500 14.400 L5.500 10.200 H9Z" fill="#fff" stroke="#000" stroke-width="1"/></g>
<path d="M277.5 112 h5 l-2.5 3.0z" fill="#000"/>
<g transform="translate(289.5 104.7)"><rect x="2.500" y=".8" width="11" height="11" fill="#efefef" stroke="#b2b2b2" stroke-width="1"/><path d="M5 2 L8 6 L12 3.500 M8 6 V11" stroke="#c8c8c8" stroke-width="1" fill="none"/></g>
<path d="M310.5 106 V120" stroke="#a0a0a0" stroke-width="1"/><path d="M311.5 106 V120" stroke="#fcfcfc" stroke-width="1"/>
<g transform="translate(318 105)"><path d="M3.500 1 V14 L6.700 11 L9 15.500 L11.200 14.400 L9 10 H13Z" fill="#000"/></g>
<path d="M338.5 106 V120" stroke="#a0a0a0" stroke-width="1"/><path d="M339.5 106 V120" stroke="#fcfcfc" stroke-width="1"/>
<g transform="translate(344.5 104.7)"><circle cx="8" cy="8" r="7.500" fill="url(#ginfo)" stroke="#0c2f80" stroke-width=".6"/><ellipse cx="8" cy="4.800" rx="5" ry="3" fill="#fff" opacity=".22"/><circle cx="8.200" cy="4" r="1.400" fill="#fff"/><path d="M6 6.800 H9.300 V11.800 H10.500 V13 H6 V11.800 H7.200 V8 H6Z" fill="#fff"/></g>
<g transform="translate(368 105)"><path d="M10 .8 L4 8.500 H7.500 L4.500 15.500 L12 6.500 H8.500 L12 .8Z" fill="#dcdcdc" stroke="#c8c8c8" stroke-width=".8"/></g>
<g transform="translate(389 105.5)"><path d="M1 1.500 H15 V11 H7 L3.500 14.500 V11 H1Z" fill="#fff" stroke="#222" stroke-width="1"/><rect x="3.500" y="4" width="3" height="4" fill="#58b0e8" stroke="#24589c" stroke-width=".6"/><rect x="4.300" y="5" width="1.400" height="1.400" fill="#f0e050"/><path d="M8 4.500 h5 M8 6.500 h5 M8 8.500 h5" stroke="#2a5cb8" stroke-width="1.100"/></g>
<path d="M410.5 106 V120" stroke="#a0a0a0" stroke-width="1"/><path d="M411.5 106 V120" stroke="#fcfcfc" stroke-width="1"/>
<g transform="translate(417 104.7)"><path d="M1 4 H6.500 M9.500 4 H15" stroke="#1c4cb0" stroke-width="1.500"/><path d="M.5 4 L3.800 1.200 V6.800Z M15.500 4 L12.200 1.200 V6.800Z" fill="#1c4cb0"/><rect x=".8" y="9.500" width="14.400" height="5.500" fill="#e8b05c" stroke="#7a4c18" stroke-width="1"/><path d="M3 9.500 v3 M5 9.500 v2 M7 9.500 v3 M9 9.500 v2 M11 9.500 v3 M13 9.500 v2" stroke="#5a3408" stroke-width=".9"/></g>
<path d="M438.5 106 V120" stroke="#a0a0a0" stroke-width="1"/><path d="M439.5 106 V120" stroke="#fcfcfc" stroke-width="1"/>
<g transform="translate(444.5 104.7)"><path d="M3.500 1 H6.500 V4 L7.500 6 V14.500 Q4 16 .8 14.500 L2.500 5Z M12.500 1 H9.500 V4 L8.500 6 V14.500 Q12 16 15.200 14.500 L13.500 5Z" fill="#3c3c3c" stroke="#111" stroke-width=".7"/><rect x="6.500" y="5" width="3" height="4" fill="#555"/><path d="M2.800 6 L1.800 13.500 M13.200 6 L14.200 13.500" stroke="#8a8a8a" stroke-width=".9"/></g>
<g transform="translate(467 104.7)"><path d="M2.500 9 V6 L9 4 H12" stroke="#1c5cb8" stroke-width="1.300" fill="none"/><circle cx="2.500" cy="10.500" r="1.800" fill="#fff" stroke="#1c5cb8" stroke-width="1.100"/><circle cx="2.500" cy="5.500" r="1.500" fill="#fff" stroke="#1c5cb8" stroke-width="1.100"/><circle cx="9" cy="3.500" r="1.500" fill="#fff" stroke="#1c5cb8" stroke-width="1.100"/><path d="M15.800 3.500 L12 .8 V6.200Z" fill="#1c5cb8"/><rect x="5.500" y="7.500" width="10" height="8" fill="#fff" stroke="#2a5ca8" stroke-width="1"/><path d="M7.500 10 h1 M10 10 h4 M7.500 12.800 h1 M10 12.800 h4" stroke="#2a5ca8" stroke-width="1.100"/></g>
<g transform="translate(489 105)"><circle cx="8" cy="3.500" r="3" fill="#fff" stroke="#1c50a8" stroke-width="1.200"/><circle cx="8" cy="3.500" r="1.100" fill="#1c50a8"/><path d="M1.500 9.500 L6.500 15.500 M6.500 9.500 L1.500 15.500" stroke="#1c50a8" stroke-width="1.700"/><path d="M9.500 9.500 L12 12.500 L14.500 9.500 M12 12.500 V15.500" stroke="#1c50a8" stroke-width="1.700" fill="none"/></g>
<path d="M510.5 106 V120" stroke="#a0a0a0" stroke-width="1"/><path d="M511.5 106 V120" stroke="#fcfcfc" stroke-width="1"/>
<g transform="translate(517 105)"><rect x=".5" y=".5" width="15" height="12.500" fill="#ececec" stroke="#b2b2b2" stroke-width="1"/><rect x="1" y="1" width="14" height="2.200" fill="#c4c4c4"/><circle cx="8" cy="9" r="4.500" fill="#e2e2e2" stroke="#b2b2b2" stroke-width="1.100"/><path d="M8 6 V9 L10 10.500" stroke="#b2b2b2" stroke-width="1" fill="none"/></g>
<path d="M538.5 106 V120" stroke="#a0a0a0" stroke-width="1"/><path d="M539.5 106 V120" stroke="#fcfcfc" stroke-width="1"/>
<g transform="translate(545 105)"><rect x=".5" y=".5" width="15" height="12" fill="#fff" stroke="#333" stroke-width="1"/><rect x="1" y="1" width="14" height="2.500" fill="url(#gwin)"/><rect x="12.500" y="1.300" width="1.500" height="1.200" fill="#fff" opacity=".8"/><path d="M10.500 11.500 L14 15" stroke="#8a4a28" stroke-width="2.200" stroke-linecap="round"/><circle cx="7.500" cy="8.800" r="4" fill="#fff" stroke="#333" stroke-width="1.100"/><path d="M5.300 8.800 h4.400 M7.500 6.600 v4.400" stroke="#000" stroke-width="1.400"/></g>
<path d="M568.25 115.5 h5.500" stroke="#000" stroke-width="1.100"/><path d="M568.05 117.7 h6 l-3 3.300z" fill="#000"/><path d="M569.25 116.5 h5.500 M572.05 121.5 l2.500 -3" stroke="#fff" stroke-width=".7" opacity=".75"/>
<rect x="588" y="107" width="2" height="2" fill="#fff"/><rect x="587" y="106" width="2" height="2" fill="#a6a6a6"/>
<rect x="588" y="111" width="2" height="2" fill="#fff"/><rect x="587" y="110" width="2" height="2" fill="#a6a6a6"/>
<rect x="588" y="115" width="2" height="2" fill="#fff"/><rect x="587" y="114" width="2" height="2" fill="#a6a6a6"/>
<rect x="588" y="119" width="2" height="2" fill="#fff"/><rect x="587" y="118" width="2" height="2" fill="#a6a6a6"/>
<path d="M630.5 112 h5 l-2.5 3.0z" fill="#000"/>
<path d="M640.5 106 V120" stroke="#a0a0a0" stroke-width="1"/><path d="M641.5 106 V120" stroke="#fcfcfc" stroke-width="1"/>
<g transform="translate(648 105)"><path d="M4 4 L12 8.500 L4 12.500Z" fill="#b2b2b2"/></g>
<g transform="translate(669.5 105)"><path d="M1.500 1 L9 5 L1.500 9Z" fill="#b2b2b2"/><path d="M8.500 15.500 L11.500 8 L14.500 15.500 M9.500 13 H13.500" stroke="#c8c8c8" stroke-width="1.300" fill="none"/></g>
<path d="M690.5 106 V120" stroke="#a0a0a0" stroke-width="1"/><path d="M691.5 106 V120" stroke="#fcfcfc" stroke-width="1"/>
<g transform="translate(697 105)"><path d="M2.500 13.500 L13.500 2.500" stroke="#b2b2b2" stroke-width="1.100"/><rect x="1" y="12" width="3" height="3" fill="#b2b2b2"/><rect x="12" y="1" width="3" height="3" fill="#b2b2b2"/></g>
<g transform="translate(718.5 105)"><path d="M2.500 13.500 Q3 6 8 5 L13.500 2.500" stroke="#b2b2b2" stroke-width="1.100" fill="none"/><rect x="1" y="12" width="3" height="3" fill="#b2b2b2"/><rect x="12" y="1" width="3" height="3" fill="#b2b2b2"/><rect x="6.500" y="4" width="2.500" height="2.500" fill="#b2b2b2"/></g>
<g transform="translate(741.5 105)"><path d="M6 1.500 H14 V12 H1.500Z" fill="none" stroke="#b2b2b2" stroke-width="1.100"/><rect x="4.500" y="0" width="3" height="3" fill="#b2b2b2"/><rect x="12.500" y="0" width="3" height="3" fill="#b2b2b2"/><rect x="12.500" y="10.500" width="3" height="3" fill="#b2b2b2"/><path d="M7 9.500 v5 M4.500 12 h5" stroke="#b2b2b2" stroke-width="1"/></g>
<path d="M762 112 h5 l-2.5 3.0z" fill="#b2b2b2"/>
<g transform="translate(774.5 105.3)"><rect x="6.500" y="6.500" width="3" height="3" fill="#a8a8a8"/><path d="M8 0 V5 M8 11 V16 M0 8 H5 M11 8 H16 M2.500 2.500 L5.500 5.500 M13.500 2.500 L10.500 5.500 M2.500 13.500 L5.500 10.500 M13.500 13.500 L10.500 10.500" stroke="#c8c8c8" stroke-width="1" stroke-dasharray="1.500 1"/></g>
<path d="M795.5 106 V120" stroke="#a0a0a0" stroke-width="1"/><path d="M796.5 106 V120" stroke="#fcfcfc" stroke-width="1"/>
<g transform="translate(801.5 105.3)"><path d="M2.500 2.500 L14 13.500 H2.500Z" fill="none" stroke="#b2b2b2" stroke-width="1.200"/><path d="M2.500 2.500 H14 V13.500" fill="none" stroke="#c8c8c8" stroke-width="1" stroke-dasharray="1.500 1.500"/><rect x="1" y="1" width="3" height="3" fill="#b2b2b2"/><rect x="12.500" y="1" width="3" height="3" fill="none" stroke="#b2b2b2" stroke-width=".8"/><rect x="1" y="12" width="3" height="3" fill="#b2b2b2"/><rect x="12.500" y="12" width="3" height="3" fill="#b2b2b2"/></g>
<g transform="translate(824 105.3)"><path d="M2.500 2 V14 M7.500 .5 V15.500" stroke="#b2b2b2" stroke-width="1.300"/><path d="M2.500 2 L7.500 5 M7.500 8 L14 10 V13.500 H9" stroke="#c8c8c8" stroke-width="1" fill="none" stroke-dasharray="1.500 1.200"/><rect x="1" y=".8" width="3" height="3" fill="#b2b2b2"/><rect x="1" y="12" width="3" height="3" fill="#b2b2b2"/><rect x="12.500" y="8.500" width="3" height="3" fill="none" stroke="#c8c8c8" stroke-width=".8"/><rect x="12.500" y="12.500" width="3" height="3" fill="none" stroke="#c8c8c8" stroke-width=".8"/></g>
<g transform="translate(846.5 105)"><rect x="1" y="4.500" width="14" height="7" fill="#dadada" stroke="#b2b2b2" stroke-width="1"/><path d="M8 1 V15" stroke="#a4a4a4" stroke-width="1.300"/><rect x="6.500" y="0" width="3" height="3" fill="#a4a4a4"/><rect x="6.500" y="13.500" width="3" height="3" fill="#a4a4a4"/></g>
<g transform="translate(869 105.3)"><path d="M1.500 14.500 L14 1.500" stroke="#b2b2b2" stroke-width="1.200"/><path d="M2 2.500 L13.500 14" stroke="#c8c8c8" stroke-width="1" stroke-dasharray="2 1.500"/><rect x="6.300" y="6.300" width="3" height="3" fill="#a8a8a8"/></g>
<g transform="translate(890.5 105)"><path d="M2 10 A6 6 0 1 1 11.500 12" fill="none" stroke="#c4c4c4" stroke-width="2.200"/><path d="M8.500 14.800 L13.500 14.500 L11.800 9.800Z" fill="#c0c0c0"/><circle cx="7.500" cy="8" r="1.200" fill="#b2b2b2"/><path d="M8 15.500 h6" stroke="#c8c8c8" stroke-width="1"/></g>
<path d="M911.5 106 V120" stroke="#a0a0a0" stroke-width="1"/><path d="M912.5 106 V120" stroke="#fcfcfc" stroke-width="1"/>
<g transform="translate(917.5 105)"><rect x=".8" y=".8" width="14.400" height="14.400" rx="1" fill="#e4e4e4" stroke="#b2b2b2" stroke-width="1"/><path d="M2.500 4 h4.500 M8.500 4 h5 M2.500 6.500 h4.500 M8.500 6.500 h5 M2.500 9 h4.500 M8.500 9 h5 M2.500 11.500 h4.500 M8.500 11.500 h5" stroke="#bdbdbd" stroke-width="1.100"/></g>
<g transform="translate(939.5 105)"><rect x=".8" y=".8" width="14.400" height="14.400" rx="1" fill="#e4e4e4" stroke="#b2b2b2" stroke-width="1"/><path d="M3.500 11 L8 4 L12.500 11" fill="none" stroke="#a4a4a4" stroke-width="1.200"/><rect x="2" y="9.500" width="3" height="3" fill="#a4a4a4"/><rect x="6.500" y="2.500" width="3" height="3" fill="#a4a4a4"/><rect x="11" y="9.500" width="3" height="3" fill="#a4a4a4"/></g>
<path d="M961.5 106 V120" stroke="#a0a0a0" stroke-width="1"/><path d="M962.5 106 V120" stroke="#fcfcfc" stroke-width="1"/>
<g transform="translate(968 105)"><rect x="1" y="1" width="11" height="14" fill="#e8e8e8" stroke="#b2b2b2" stroke-width="1"/><path d="M2.500 4 h2 v2 h-2z M2.500 8 h2 v2 h-2z M2.500 12 h2 v2 h-2z" fill="none" stroke="#b2b2b2" stroke-width=".8"/><path d="M6 5 h4 M6 9 h3 M6 13 h4" stroke="#c8c8c8" stroke-width="1"/><path d="M8 10 L14 2.500 L15.800 4 L10 11.500 L7.500 12.500Z" fill="#d4d4d4" stroke="#b2b2b2" stroke-width=".7"/></g>
<path d="M991.5 115.5 h5.500" stroke="#000" stroke-width="1.100"/><path d="M991.3 117.7 h6 l-3 3.300z" fill="#000"/><path d="M992.5 116.5 h5.500 M995.3 121.5 l2.500 -3" stroke="#fff" stroke-width=".7" opacity=".75"/>
<rect x="1007" y="107" width="2" height="2" fill="#fff"/><rect x="1006" y="106" width="2" height="2" fill="#a6a6a6"/>
<rect x="1007" y="111" width="2" height="2" fill="#fff"/><rect x="1006" y="110" width="2" height="2" fill="#a6a6a6"/>
<rect x="1007" y="115" width="2" height="2" fill="#fff"/><rect x="1006" y="114" width="2" height="2" fill="#a6a6a6"/>
<rect x="1007" y="119" width="2" height="2" fill="#fff"/><rect x="1006" y="118" width="2" height="2" fill="#a6a6a6"/>
<path d="M1068 112 h5 l-2.5 3.0z" fill="#000"/>
<g transform="translate(1079 105.3)"><circle cx="8" cy="8" r="5.800" fill="#dbe9f8" stroke="#2a3f6a" stroke-width="1.200"/></g>
<g transform="translate(1100.5 105.3)"><rect x="1.500" y="1.500" width="13" height="13" fill="#dce9f8"/><rect x="3.500" y="3.500" width="9" height="9" fill="#fff" stroke="#2a3f6a" stroke-width="1.100"/><path d="M8 3.500 V12.500 M3.500 8 H12.500" stroke="#2a3f6a" stroke-width="1.100"/></g>
<g transform="translate(1123 105.3)"><rect x="1.500" y="1.500" width="13" height="13" fill="#c6dcf4"/><rect x="3.500" y="3.500" width="9" height="9" fill="#dce9f8" stroke="#2a3f6a" stroke-width="1.200"/></g>
<g transform="translate(1144.5 105.3)"><rect x="3.500" y="4.500" width="9" height="9" fill="#c6dcf4"/><rect x="4.500" y="5.500" width="7" height="7" fill="#dce9f8" stroke="#2a3f6a" stroke-width="1.200"/><path d="M.5 15 L15.500 1" stroke="#2a3f6a" stroke-width="1.200"/></g>
<path d="M1168.75 115.5 h5.500" stroke="#000" stroke-width="1.100"/><path d="M1168.55 117.7 h6 l-3 3.300z" fill="#000"/><path d="M1169.75 116.5 h5.500 M1172.55 121.5 l2.500 -3" stroke="#fff" stroke-width=".7" opacity=".75"/>
<rect x="56" y="133" width="2" height="2" fill="#fff"/><rect x="55" y="132" width="2" height="2" fill="#a6a6a6"/>
<rect x="56" y="137" width="2" height="2" fill="#fff"/><rect x="55" y="136" width="2" height="2" fill="#a6a6a6"/>
<rect x="56" y="141" width="2" height="2" fill="#fff"/><rect x="55" y="140" width="2" height="2" fill="#a6a6a6"/>
<rect x="56" y="145" width="2" height="2" fill="#fff"/><rect x="55" y="144" width="2" height="2" fill="#a6a6a6"/>
<g transform="translate(61 131)"><path d="M8 .8 L15.500 7 L8 13.500 L.5 7Z" fill="#f2c24c" stroke="#8a5c10" stroke-width="1"/><path d="M8 3 L12.800 7 L8 11.200 L3.200 7Z" fill="#fff" stroke="#333" stroke-width=".7"/><path d="M8 3 L5.500 5 L8 8Z" fill="#f08060"/><path d="M5.500 5 L3.200 7 L8 11.200 V8Z" fill="#58b8e8"/><path d="M8 3 L12.800 7 L8 11.200Z" fill="#f8e468"/><path d="M8 3 V11.200" stroke="#333" stroke-width=".5"/></g>
<path d="M224.5 137.5 h7 l-3.5 4.0z" fill="#000"/>
<path d="M243.5 141.5 h5.500" stroke="#000" stroke-width="1.100"/><path d="M243.3 143.7 h6 l-3 3.300z" fill="#000"/><path d="M244.5 142.5 h5.500 M247.3 147.5 l2.500 -3" stroke="#fff" stroke-width=".7" opacity=".75"/>
<path d="M242.5 131.3 l2.500 2.200 l-2.500 2.200z M246.7 131.3 l2.500 2.200 l-2.500 2.200z" fill="#000"/>
<rect x="259" y="133" width="2" height="2" fill="#fff"/><rect x="258" y="132" width="2" height="2" fill="#a6a6a6"/>
<rect x="259" y="137" width="2" height="2" fill="#fff"/><rect x="258" y="136" width="2" height="2" fill="#a6a6a6"/>
<rect x="259" y="141" width="2" height="2" fill="#fff"/><rect x="258" y="140" width="2" height="2" fill="#a6a6a6"/>
<rect x="259" y="145" width="2" height="2" fill="#fff"/><rect x="258" y="144" width="2" height="2" fill="#a6a6a6"/>
<path d="M314 138 h5 l-2.5 3.0z" fill="#000"/>
<g transform="translate(325.5 131)"><path d="M3.500 1 V14 L6.700 11 L9 15.500 L11.200 14.400 L9 10 H13Z" fill="#000"/></g>
<g transform="translate(346.5 131)"><path d="M2.500 11.500 A6.200 6.200 0 1 1 12.800 12.300" fill="none" stroke="#b2b2b2" stroke-width="1" stroke-dasharray="none"/><path d="M10 13.800 L14.300 14.500 L13.800 10Z" fill="#b2b2b2"/><rect x="6.800" y="6.800" width="2.400" height="2.400" fill="none" stroke="#b2b2b2" stroke-width=".9"/></g>
<g transform="translate(369 131)"><rect x="1.500" y=".8" width="14" height="12.500" rx="1" fill="#e8e8e8" stroke="#b2b2b2" stroke-width="1"/><path d="M2.500 5.500 h6 M5.500 2.500 v6" stroke="#a4a4a4" stroke-width="2"/><rect x="10" y="2.500" width="3.500" height="3" fill="#c4c4c4"/><rect x="10" y="8" width="3.500" height="3" fill="#c4c4c4"/><circle cx="8.500" cy="9.500" r="2.800" fill="#e0e0e0" stroke="#b2b2b2" stroke-width=".9"/><path d="M10.500 11.500 L13.500 15" stroke="#b2b2b2" stroke-width="1.800"/></g>
<path d="M390.5 132 V146" stroke="#a0a0a0" stroke-width="1"/><path d="M391.5 132 V146" stroke="#fcfcfc" stroke-width="1"/>
<g transform="translate(396.5 130.5)"><rect x="1.500" y="1.500" width="13" height="12.500" fill="url(#grect)" stroke="#333" stroke-width="1.200"/></g>
<path d="M418 138 h5 l-2.5 3.0z" fill="#000"/>
<path d="M451 138 h5 l-2.5 3.0z" fill="#000"/>
<g transform="translate(463 131)"><path d="M3 3.500 L13.500 1.500 L8 8 L13.500 13.500 L2.500 13.500Z" fill="none" stroke="#c8c8c8" stroke-width="1.100"/><g fill="#f2f2f2" stroke="#b2b2b2" stroke-width=".8"><rect x="1.500" y="2" width="3" height="3"/><rect x="12" y=".5" width="3" height="3"/><rect x="6.500" y="6.500" width="3" height="3"/><rect x="12" y="12" width="3" height="3"/><rect x="1" y="12" width="3" height="3"/></g></g>
<path d="M484.5 132 V146" stroke="#a0a0a0" stroke-width="1"/><path d="M485.5 132 V146" stroke="#fcfcfc" stroke-width="1"/>
<g transform="translate(492 131)"><path d="M.5 .5 H9 L12.500 4 V14.500 H.5Z" fill="#d6e4f8" stroke="#5a86d0" stroke-width="1"/><path d="M9 .5 V4 H12.500" fill="#eef4fc" stroke="#5a86d0" stroke-width=".8"/><ellipse cx="6.300" cy="8.300" rx="2.700" ry="4.300" transform="rotate(18 6.300 8.300)" fill="none" stroke="#0c3c14" stroke-width="2"/><ellipse cx="6.300" cy="8.300" rx="1.300" ry="3" transform="rotate(18 6.300 8.300)" fill="#e8f4e0"/></g>
<path d="M646.5 137.5 h7.5 l-3.75 4.25z" fill="#000"/>
<path d="M692.5 137.5 h7.5 l-3.75 4.25z" fill="#000"/>
<path d="M747.25 141.5 h5.500" stroke="#000" stroke-width="1.100"/><path d="M747.05 143.7 h6 l-3 3.300z" fill="#000"/><path d="M748.25 142.5 h5.500 M751.05 147.5 l2.500 -3" stroke="#fff" stroke-width=".7" opacity=".75"/>
<path d="M746.25 131.3 l2.500 2.200 l-2.500 2.200z M750.45 131.3 l2.500 2.200 l-2.500 2.200z" fill="#000"/>
<rect x="763" y="133" width="2" height="2" fill="#fff"/><rect x="762" y="132" width="2" height="2" fill="#a6a6a6"/>
<rect x="763" y="137" width="2" height="2" fill="#fff"/><rect x="762" y="136" width="2" height="2" fill="#a6a6a6"/>
<rect x="763" y="141" width="2" height="2" fill="#fff"/><rect x="762" y="140" width="2" height="2" fill="#a6a6a6"/>
<rect x="763" y="145" width="2" height="2" fill="#fff"/><rect x="762" y="144" width="2" height="2" fill="#a6a6a6"/>
<path d="M855 138 h5 l-2.5 3.0z" fill="#000"/>
<path d="M865 132 V146" stroke="#a0a0a0" stroke-width="1"/><path d="M866 132 V146" stroke="#fcfcfc" stroke-width="1"/>
<path d="M1036 138 h8 l-4.0 4.5z" fill="#9a9a9a"/>
<g transform="translate(1052 131)"><path d="M12 .5 v6 M9 3.500 h6 M3.500 9.500 v6 M.5 12.500 h6" stroke="#a8a8a8" stroke-width="1"/><path d="M4.500 11.500 L11 4.500" stroke="#a8a8a8" stroke-width="1.100"/></g>
<g transform="translate(1074 131)"><path d="M12 .5 v6 M9 3.500 h6 M3.500 9.500 v6 M.5 12.500 h6" stroke="#a8a8a8" stroke-width="1"/><path d="M5 6 L13 14.500" stroke="#b4b4b4" stroke-width="2.200"/><path d="M3 2.500 l1 2 M6.500 1.500 l-.5 2 M1.500 6 l2 .5 M7 6.500 l1.500 -.5 M5 3.500 l.5 1" stroke="#c8c8c8" stroke-width="1"/></g>
<g transform="translate(1096 131)"><path d="M12 .5 v6 M9 3.500 h6 M3.500 9.500 v6 M.5 12.500 h6" stroke="#a8a8a8" stroke-width="1"/><path d="M6 4.500 V13 L8 11.200 L9.500 14.500 L10.800 13.800 L9.300 10.800 H12Z" fill="#d0d0d0" stroke="#a8a8a8" stroke-width=".8"/></g>
<g transform="translate(1118 131)"><path d="M12 .5 v6 M9 3.500 h6 M3.500 9.500 v6 M.5 12.500 h6" stroke="#a8a8a8" stroke-width="1"/><circle cx="8" cy="9" r="3.300" fill="#ececec" stroke="#a8a8a8" stroke-width="1"/><path d="M6.500 9 h3 M8 7.500 v3" stroke="#a8a8a8" stroke-width=".9"/><path d="M10.500 11.500 L13.500 14.800" stroke="#a8a8a8" stroke-width="1.800"/></g>
<g transform="translate(1140 131)"><path d="M12 .5 v6 M9 3.500 h6 M3.500 9.500 v6 M.5 12.500 h6" stroke="#a8a8a8" stroke-width="1"/><path d="M7.500 9.500 L12.500 14.500 M12.500 9.500 L7.500 14.500" stroke="#aaa" stroke-width="2"/></g>
<g transform="translate(1162 130)"><rect x=".8" y=".8" width="14.400" height="11.500" fill="#ececec" stroke="#a8a8a8" stroke-width="1"/><path d="M1 3 h14" stroke="#a8a8a8" stroke-width="1.400"/><path d="M3 6.500 h10 M3 9.500 h4 M4.500 5 v3 M11.500 5 v3" stroke="#c8c8c8" stroke-width=".9"/><circle cx="8.500" cy="9.500" r="3" fill="#e8e8e8" stroke="#a8a8a8" stroke-width="1"/><path d="M7 9.500 h3 M8.500 8 v3" stroke="#a8a8a8" stroke-width=".9"/><path d="M10.800 11.800 L13.500 14.800" stroke="#a8a8a8" stroke-width="1.800"/></g>
<g transform="translate(1184 130)"><rect x=".8" y=".8" width="14.400" height="11.500" fill="#ececec" stroke="#a8a8a8" stroke-width="1"/><path d="M1 3 h14" stroke="#a8a8a8" stroke-width="1.400"/><path d="M3 6.200 h10 M3 9.500 h10 M4.500 4.800 v3 M11.500 4.800 v3 M4.500 8 v3 M11.500 8 v3" stroke="#b0b0b0" stroke-width=".9"/></g>
<g transform="translate(1206 131)"><path d="M2 10.500 A6 6 0 1 1 12.500 11" fill="none" stroke="#c0c0c0" stroke-width="2"/><path d="M8.500 13.800 L13.800 14 L12.500 9Z" fill="#b8b8b8"/><path d="M8 6 v3 M6.500 7.500 h3" stroke="#a8a8a8" stroke-width=".8"/></g>
<path d="M1227 138 h5 l-2.5 3.0z" fill="#9a9a9a"/>
<path d="M1320.5 142.5 h5.500" stroke="#000" stroke-width="1.100"/><path d="M1320.3 144.7 h6 l-3 3.300z" fill="#000"/><path d="M1321.5 143.5 h5.500 M1324.3 148.5 l2.500 -3" stroke="#fff" stroke-width=".7" opacity=".75"/></svg>
<div class="a" style="left:51px;top:152px;width:234px;height:20px;background:linear-gradient(90deg,#a4bede 0,#abc4e1 50%,#b9cfe8 100%);"></div>
<span class="t" style="left:53.5px;top:156.59px;font-size:12.3px;transform:scaleX(0.9700);">Table Of Contents</span>
<svg style="left:254px;top:156px" width="30" height="12" viewBox="0 0 30 12">
<path d="M4.500 6 V1.500 H8" stroke="#000" stroke-width="1" fill="none"/><path d="M8.300 1 V6" stroke="#000" stroke-width="1.700"/><path d="M3 6.500 H10" stroke="#000" stroke-width="1.200"/><path d="M6.500 7 V10" stroke="#000" stroke-width="1.200"/>
<path d="M18.600 2.600 L25.400 8.600 M25.400 2.600 L18.600 8.600" stroke="#000" stroke-width="1.900" fill="none"/></svg>
<div class="a" style="left:51px;top:172px;width:234px;height:26px;background:linear-gradient(180deg,#fbfbfb 0,#f0f0f0 100%);"></div>
<div class="a" style="left:53px;top:174px;width:20px;height:20px;border:1px solid #3399ff;background:#e0ecf8;border-radius:1px;box-shadow:inset 0 0 0 1px #eef5fc;"></div>
<svg style="left:50px;top:170px" width="120" height="30" viewBox="0 0 120 30">
<defs><linearGradient id="or1" x1="0" y1="0" x2="0" y2="1"><stop offset="0" stop-color="#fff0c0"/><stop offset="1" stop-color="#eeae48"/></linearGradient>
<linearGradient id="cy1" x1="0" y1="0" x2="1" y2="0"><stop offset="0" stop-color="#fafbfd"/><stop offset=".45" stop-color="#c4cad8"/><stop offset="1" stop-color="#6a7490"/></linearGradient></defs>
<path d="M10 13 V21.500 H12.500 M10 15.500 H12.500" stroke="#a8c4ec" stroke-width="1.200" fill="none"/>
<g stroke="#d09838" stroke-width=".7" fill="url(#or1)"><ellipse cx="8.800" cy="10.800" rx="3" ry="2.200"/><ellipse cx="8.800" cy="8.800" rx="3" ry="2.200"/><path d="M14.800 11.200 L18 13.700 L14.800 16.200 L11.600 13.700Z"/><path d="M14.800 17.800 L18 20.300 L14.800 22.800 L11.600 20.300Z"/></g>
<path d="M18.700 14.300 H22 M18.700 20.600 H22" stroke="#1c4c8c" stroke-width="1.500"/>
<path d="M30 17.200 H42 L36 23Z" fill="url(#or1)" stroke="#d09838" stroke-width=".7"/>
<path d="M31.200 8.500 V15 Q36 17.800 41 15 V8.500Z" fill="url(#cy1)" stroke="#5a6480" stroke-width=".7"/><ellipse cx="36.100" cy="8.500" rx="4.900" ry="1.800" fill="#e4e8f0" stroke="#5a6480" stroke-width=".7"/>
<path d="M58 12 L66 17.500 L58 23 L50 17.500Z" fill="#e2e2e4" stroke="#8a8c92" stroke-width=".8"/>
<path d="M58 7 L66 12.600 L58 18.200 L50 12.600Z" fill="url(#or1)" stroke="#d09838" stroke-width=".8"/>
<path d="M72 16 H88 L80 23Z" fill="url(#or1)" stroke="#d09838" stroke-width=".7"/>
<rect x="75.500" y="7.500" width="9.500" height="9" fill="#fdfdfd" stroke="#3a3a3a" stroke-width="1.100"/><path d="M76 8 H79.500 L81 12 L82 16 H76Z" fill="#1cc0e8"/><path d="M82 9.500 h2 M81.500 10.500 v4" stroke="#666" stroke-width=".8"/>
<path d="M93.500 8 V21.500" stroke="#a8a8a8" stroke-width="1"/>
<rect x="101.500" y="8.500" width="12" height="12.500" fill="#fff" stroke="#6a7894" stroke-width="1"/><path d="M101.500 21.500 H114 V8.500" fill="none" stroke="#3a4a6c" stroke-width="1"/>
<circle cx="104.500" cy="11.700" r="1.100" fill="#fff" stroke="#111" stroke-width=".9"/><circle cx="104.500" cy="18.300" r="1.100" fill="#fff" stroke="#111" stroke-width=".9"/>
<path d="M107.500 11.500 H112 M107.500 14.500 H112 M107.500 18.300 H112" stroke="#8aa0c8" stroke-width="1.300"/></svg>
<div class="a" style="left:51px;top:198px;width:231px;height:585px;background:#fff;border:1px solid #828790;border-left-color:#fff;"></div>
<svg width="0" height="0" style="left:0;top:0"><defs><linearGradient id="ebg" x1="0" y1="0" x2="1" y2="1"><stop offset="0" stop-color="#fff"/><stop offset=".5" stop-color="#f6f6f6"/><stop offset="1" stop-color="#d4d4d4"/></linearGradient></defs></svg>
<svg style="left:58px;top:206px" width="9" height="9" viewBox="0 0 9 9"><rect x=".5" y=".5" width="8" height="8" rx="1.200" fill="url(#ebg)" stroke="#919191"/><path d="M2 4.500 H7" stroke="#3a4aa8" stroke-width="1"/></svg>
<svg style="left:73px;top:203px" width="17" height="13" viewBox="0 0 17 13"><g fill="url(#or1)" stroke="#c8902c" stroke-width=".8">
<path d="M3 8.500 L14 7.800 L11.500 11.200 L.8 11.800Z"/><path d="M4 5 L15 4.300 L12.500 7.700 L1.800 8.300Z"/><path d="M5 1.300 L16 .6 L13.500 4 L2.800 4.600Z"/></g></svg>
<span class="t" style="left:94.5px;top:202.97px;font-size:12.2px;font-weight:bold;transform:scaleX(0.8897);">Layers</span>
<svg style="left:77px;top:224px" width="9" height="9" viewBox="0 0 9 9"><rect x=".5" y=".5" width="8" height="8" rx="1.200" fill="url(#ebg)" stroke="#919191"/><path d="M2 4.500 H7" stroke="#3a4aa8" stroke-width="1"/></svg>
<svg style="left:94px;top:222px" width="11" height="11" viewBox="0 0 11 11"><rect x=".5" y=".5" width="10" height="10" fill="#fff" stroke="#1c1c1c"/><path d="M2.500 5 L4.500 7.400 L8.400 2.700" stroke="#000" stroke-width="1.700" fill="none"/></svg>
<svg style="left:77px;top:260px" width="9" height="9" viewBox="0 0 9 9"><rect x=".5" y=".5" width="8" height="8" rx="1.200" fill="url(#ebg)" stroke="#919191"/><path d="M2 4.500 H7" stroke="#3a4aa8" stroke-width="1"/></svg>
<svg style="left:94px;top:258px" width="11" height="11" viewBox="0 0 11 11"><rect x=".5" y=".5" width="10" height="10" fill="#fff" stroke="#1c1c1c"/><path d="M2.500 5 L4.500 7.400 L8.400 2.700" stroke="#000" stroke-width="1.700" fill="none"/></svg>
<svg style="left:77px;top:332px" width="9" height="9" viewBox="0 0 9 9"><rect x=".5" y=".5" width="8" height="8" rx="1.200" fill="url(#ebg)" stroke="#919191"/><path d="M2 4.500 H7" stroke="#3a4aa8" stroke-width="1"/></svg>
<svg style="left:94px;top:330px" width="11" height="11" viewBox="0 0 11 11"><rect x=".5" y=".5" width="10" height="10" fill="#fff" stroke="#1c1c1c"/><path d="M2.500 5 L4.500 7.400 L8.400 2.700" stroke="#000" stroke-width="1.700" fill="none"/></svg>
<svg style="left:77px;top:368px" width="9" height="9" viewBox="0 0 9 9"><rect x=".5" y=".5" width="8" height="8" rx="1.200" fill="url(#ebg)" stroke="#919191"/><path d="M2 4.500 H7" stroke="#3a4aa8" stroke-width="1"/></svg>
<svg style="left:94px;top:366px" width="11" height="11" viewBox="0 0 11 11"><rect x=".5" y=".5" width="10" height="10" fill="#fff" stroke="#1c1c1c"/><path d="M2.500 5 L4.500 7.400 L8.400 2.700" stroke="#000" stroke-width="1.700" fill="none"/></svg>
<span class="t" style="left:113.2px;top:220.87px;font-size:12.2px;transform:scaleX(0.8775);">Sites</span>
<svg style="left:108.500px;top:241px" width="11" height="11" viewBox="0 0 11 11"><circle cx="5.500" cy="5.500" r="4.200" fill="#e60000" stroke="#300" stroke-width="1"/><circle cx="5.500" cy="5.500" r="1" fill="#200"/></svg>
<span class="t" style="left:113.2px;top:256.87px;font-size:12.2px;transform:scaleX(0.9109);">2NearestSites</span>
<span class="t" style="left:132.5px;top:274.87px;font-size:12.2px;transform:scaleX(0.8850);">NEAR_RANK</span>
<div class="a" style="left:109px;top:298px;width:15px;height:3px;border-radius:1.500px;background:#ffa800;"></div>
<span class="t" style="left:126.5px;top:292.87px;font-size:12.2px;transform:scaleX(0.8106);">1</span>
<div class="a" style="left:109px;top:316px;width:15px;height:3px;border-radius:1.500px;background:#ffff00;"></div>
<span class="t" style="left:126.8px;top:310.87px;font-size:12.2px;transform:scaleX(0.9138);">2</span>
<span class="t" style="left:113.2px;top:328.87px;font-size:12.2px;transform:scaleX(0.9609);">World_Country_Boundaries</span>
<div class="a" style="left:109px;top:348px;width:13px;height:9px;background:#fff;border:1px solid #000;"></div>
<span class="t" style="left:113.2px;top:364.87px;font-size:12.2px;transform:scaleX(0.8851);">GSGRDA EU-DEM</span>
<span class="t" style="left:132.5px;top:382.87px;font-size:12.2px;transform:scaleX(0.8132);">RGB</span>
<div class="a" style="left:109px;top:402px;width:13px;height:9px;background:#ff0000;border:1px solid #6e6e6e;"></div>
<span class="t" style="left:127px;top:400.87px;font-size:12.2px;transform:scaleX(0.8731);">Red:</span>
<div class="a" style="left:109px;top:420px;width:13px;height:9px;background:#00ff00;border:1px solid #6e6e6e;"></div>
<span class="t" style="left:127px;top:418.87px;font-size:12.2px;transform:scaleX(0.8982);">Green:</span>
<div class="a" style="left:109px;top:438px;width:13px;height:9px;background:#0000ff;border:1px solid #6e6e6e;"></div>
<span class="t" style="left:127px;top:436.87px;font-size:12.2px;transform:scaleX(0.9170);">Blue:</span>
<span class="t" style="left:162px;top:400.87px;font-size:12.2px;transform:scaleX(0.8915);">Band_1</span>
<span class="t" style="left:164px;top:418.87px;font-size:12.2px;transform:scaleX(0.9034);">Band_2</span>
<span class="t" style="left:162px;top:436.87px;font-size:12.2px;transform:scaleX(0.8915);">Band_3</span>
<div class="a" style="left:51px;top:785px;width:234px;height:1px;background:#a8a8a8;"></div>
<div class="a" style="left:52px;top:785px;width:63px;height:18px;background:#f0f0f0;border:1px solid #a8a8a8;border-top:none;border-radius:0 0 4px 4px;"></div>
<div class="a" style="left:116px;top:785px;width:81px;height:18px;background:#f0f0f0;border:1px solid #a8a8a8;border-top:none;border-radius:0 0 4px 4px;"></div>
<div class="a" style="left:198px;top:785px;width:83px;height:18px;background:#f4f4f4;border:1px solid #a8a8a8;border-top:none;border-radius:0 0 4px 4px;"></div>
<div class="a" style="left:199px;top:785px;width:82px;height:1px;background:#f4f4f4;"></div>
<div class="a" style="left:201px;top:787px;width:77px;height:15px;border:1px dotted #222;box-sizing:border-box;"></div>
<svg style="left:56px;top:787.500px" width="170" height="14" viewBox="0 0 170 14">
<rect x=".5" y=".5" width="14" height="11.500" fill="#fff" stroke="#333"/><rect x="1" y="1" width="13" height="2.300" fill="#3a5cb0"/>
<path d="M4 13 L9 7.500" stroke="#b87838" stroke-width="2"/><path d="M6.500 5.500 L10 4 L13 7 L11.500 8.500 L10 7.500 L8.500 8.500Z" fill="#666" stroke="#222" stroke-width=".6"/>
<g transform="translate(65.500 0)"><rect x=".5" y=".5" width="14" height="11.500" fill="#fff" stroke="#333"/><rect x="1" y="1" width="13" height="2.300" fill="#3a5cb0"/><path d="M3 7.500 L9 5.500 L13.500 7 V12 L7.500 14 L3 12.500Z" fill="#d03828" stroke="#6a1408" stroke-width=".7"/><path d="M3 7.500 L7.500 9 L13.500 7 M7.500 9 V14" stroke="#6a1408" stroke-width=".6" fill="none"/><rect x="6.500" y="10" width="2" height="1.500" fill="#ddd"/></g>
<g transform="translate(149 0)"><rect x=".5" y=".5" width="15" height="11.500" fill="#fff" stroke="#333"/><rect x="1" y="1" width="14" height="2.300" fill="#3a5cb0"/><path d="M3 5.500 h2 M3 7.800 h2 M3 10 h2" stroke="#d04030" stroke-width="1.100"/><path d="M6.500 5.500 h6.500 M6.500 7.800 h5 M6.500 10 h6" stroke="#3a6ad0" stroke-width="1.100"/></g>
</svg>
<span class="t" style="left:76px;top:788.87px;font-size:12.2px;color:#6d6d6d;transform:scaleX(0.8726);">Results</span>
<span class="t" style="left:140.5px;top:788.87px;font-size:12.2px;color:#6d6d6d;transform:scaleX(0.9931);">ArcTool...</span>
<span class="t" style="left:223px;top:788.87px;font-size:12.2px;transform:scaleX(0.9622);">Table Of...</span>
<div class="a" style="left:289px;top:153px;width:1040px;height:653px;background:#f0f0f0;"></div>
<div class="a" style="left:289px;top:153px;width:1023px;height:637px;background:#fff;"></div>
<div class="a" style="left:289px;top:152px;width:1022px;height:1px;background:#b4b4b4;z-index:2;"></div><div class="a" style="left:289px;top:153px;width:1022px;height:1px;background:#646464;z-index:2;"></div><div class="a" style="left:289px;top:152px;width:1px;height:654px;background:#8a8a8a;z-index:2;"></div><div class="a" style="left:290px;top:153px;width:1px;height:653px;background:#646464;z-index:2;"></div>
<svg style="left:290px;top:154px;overflow:hidden" width="1020" height="634" viewBox="290 154 1020 634">
<defs>
<filter id="b20" x="-30%" y="-30%" width="160%" height="160%"><feGaussianBlur stdDeviation="11"/></filter>
<filter id="b8" x="-30%" y="-30%" width="160%" height="160%"><feGaussianBlur stdDeviation="5"/></filter>
<filter id="b4" x="-30%" y="-30%" width="160%" height="160%"><feGaussianBlur stdDeviation="4"/></filter>
<filter id="relief" x="0" y="0" width="100%" height="100%" color-interpolation-filters="sRGB">
<feTurbulence type="turbulence" baseFrequency="0.028 0.034" numOctaves="5" seed="4" result="n"/>
<feDiffuseLighting in="n" surfaceScale="5" diffuseConstant="1.320" lighting-color="#ffffff"><feDistantLight azimuth="225" elevation="48"/></feDiffuseLighting>
<feComponentTransfer><feFuncR type="linear" slope=".40" intercept=".655"/><feFuncG type="linear" slope=".40" intercept=".655"/><feFuncB type="linear" slope=".44" intercept=".61"/></feComponentTransfer>
</filter>
<mask id="tm"><rect x="290" y="154" width="1021" height="634" fill="#0c0c0c"/><g filter="url(#b8)"><path d="M285 150 H326 L318 198 L300 232 L285 238Z" fill="#999"/><g fill="#9a9a9a"><path d="M1194 150 L1186 179 L1205 189 L1245 179 L1262 172 L1280 198 L1288 228 L1315 242 L1315 150Z"/><path d="M1168 260 L1186 231 L1216 222 L1258 210 L1288 224 L1315 238 L1315 300 L1245 298 L1216 294 L1186 298 L1172 282Z"/></g><g fill="#c8c8c8"><path d="M1148 338 L1198 314 L1245 300 L1315 296 L1315 472 L1258 496 L1204 478 L1186 462 L1160 424 L1142 376Z"/></g><g fill="#fff"><path d="M1198 484 L1256 500 L1315 470 L1315 702 L1288 704 L1276 672 L1264 640 L1242 616 L1222 606 L1200 600 L1192 560Z"/><path d="M1056 795 L1072 742 L1088 714 L1104 694 L1136 666 L1166 676 L1192 668 L1230 670 L1252 686 L1268 708 L1315 700 L1315 795Z"/></g></g></mask>
</defs>
<rect x="290" y="154" width="1021" height="634" fill="#bbdea5"/>
<linearGradient id="lg" x1="0" y1="0" x2="1" y2="0"><stop offset="0" stop-color="#cddfab" stop-opacity="1"/><stop offset=".35" stop-color="#c8dfa9" stop-opacity=".7"/><stop offset="1" stop-color="#c0dfa6" stop-opacity="0"/></linearGradient><rect x="290" y="154" width="140" height="634" fill="url(#lg)"/>
<g filter="url(#b8)"><path d="M285 150 H328 L318 200 L300 235 L285 240Z" fill="#dce0c0" opacity=".85"/></g>
<filter id="b30" x="-40%" y="-40%" width="180%" height="180%"><feGaussianBlur stdDeviation="22"/></filter>
<g filter="url(#b30)" fill="#d8dcb4" opacity=".55"><path d="M1150 320 L1315 300 L1315 480 L1200 470 L1150 420Z"/><path d="M1200 480 H1315 V680 H1225Z"/><path d="M1230 270 H1315 V320 H1230Z"/><path d="M1090 795 L1115 700 L1200 670 L1315 700 V795Z"/></g>
<g filter="url(#b20)" fill="#dcdcb8" opacity=".7"><path d="M1194 150 L1186 179 L1205 189 L1245 179 L1262 172 L1280 198 L1288 228 L1315 242 L1315 150Z"/><path d="M1168 260 L1186 231 L1216 222 L1258 210 L1288 224 L1315 238 L1315 300 L1245 298 L1216 294 L1186 298 L1172 282Z"/></g><g filter="url(#b8)" fill="#dedcba" opacity=".45"><path d="M1194 150 L1186 179 L1205 189 L1245 179 L1262 172 L1280 198 L1288 228 L1315 242 L1315 150Z"/><path d="M1168 260 L1186 231 L1216 222 L1258 210 L1288 224 L1315 238 L1315 300 L1245 298 L1216 294 L1186 298 L1172 282Z"/></g>
<g filter="url(#b20)" fill="#e0deba" opacity=".85"><path d="M1148 338 L1198 314 L1245 300 L1315 296 L1315 472 L1258 496 L1204 478 L1186 462 L1160 424 L1142 376Z"/></g><g filter="url(#b8)" fill="#e2dfbe" opacity=".55"><path d="M1148 338 L1198 314 L1245 300 L1315 296 L1315 472 L1258 496 L1204 478 L1186 462 L1160 424 L1142 376Z"/></g>
<g filter="url(#b20)" fill="#e2dcba" opacity=".92"><path d="M1198 484 L1256 500 L1315 470 L1315 702 L1288 704 L1276 672 L1264 640 L1242 616 L1222 606 L1200 600 L1192 560Z"/><path d="M1056 795 L1072 742 L1088 714 L1104 694 L1136 666 L1166 676 L1192 668 L1230 670 L1252 686 L1268 708 L1315 700 L1315 795Z"/></g><g filter="url(#b8)" fill="#e4dec0" opacity=".7"><path d="M1198 484 L1256 500 L1315 470 L1315 702 L1288 704 L1276 672 L1264 640 L1242 616 L1222 606 L1200 600 L1192 560Z"/><path d="M1056 795 L1072 742 L1088 714 L1104 694 L1136 666 L1166 676 L1192 668 L1230 670 L1252 686 L1268 708 L1315 700 L1315 795Z"/></g>
<g filter="url(#b20)" fill="#d8c690" opacity=".55"><path d="M1060 795 L1080 735 L1120 715 L1180 730 L1240 715 L1315 715 V795Z"/></g>
<g filter="url(#b20)"><path d="M1250 520 L1285 522 L1312 560 L1314 635 L1296 632 L1268 600 L1246 560Z" fill="#e4b66a" opacity=".95"/><path d="M1268 535 L1290 550 L1306 620 L1296 618 L1278 580Z" fill="#dca04c" opacity=".9"/></g><g filter="url(#b8)"><ellipse cx="1090" cy="758" rx="18" ry="12" fill="#e2b468" opacity=".85"/><ellipse cx="1136" cy="774" rx="22" ry="10" fill="#e0aa58" opacity=".9"/><ellipse cx="1222" cy="752" rx="22" ry="13" fill="#e4b870" opacity=".8"/><ellipse cx="1276" cy="735" rx="18" ry="11" fill="#e4b870" opacity=".8"/><ellipse cx="1306" cy="375" rx="7" ry="15" fill="#e4b870" opacity=".8"/><ellipse cx="1180" cy="768" rx="34" ry="15" fill="#e6c888" opacity=".6"/><ellipse cx="1302" cy="784" rx="14" ry="8" fill="#e4b462" opacity=".8"/></g>
<g filter="url(#b4)"><path d="M1270 532 L1284 570 L1302 624" stroke="#a08448" stroke-width="5" fill="none" opacity=".45"/></g>
<rect x="290" y="154" width="1021" height="634" filter="url(#relief)" mask="url(#tm)" style="mix-blend-mode:multiply" opacity=".9"/>
<polyline points="1163.5,154 1158,170 1160,176 1145,197 1149,211 1149,224 1132,235 1126,264 1122,269 1111,268 1097,274 1091,290 1083,300 1072,308 1074,317 1083,327 1080,345 1083,349 1079,355 1067,368 1054,368 1052,374 1059,392 1053,398 1056,404 1046,409 1028,416 1021,422 1022,435 1020,451 1009,457 1010,463 1028,477 1025,490.5 1014,502 1001.6,500 987,504 990.6,517 997.6,520 996,524 987,527 981,540 971,539 964,533 959,536 949,536.5 942.7,547.4 939,561 945.5,564.5 940.6,578 928,587 922,606 928,620.6 940.6,624.7 945.5,637 944.7,646 937,650 934.5,662 920,658.5 909,659 902,666.6 898,681.6 898,702 890.6,708 892.6,720 879.6,723.5 876.8,720 867.4,722 863,736.5 855,746.7 848,755 839,752 833,741 814.6,744 805,742.6 801,735 794,735.7 792,742.6 775,729.6 736.5,736.4 725,753.6 729,773.5 719,775.5 720,779.5 714.6,788" fill="none" stroke="#000" stroke-width="1.1" stroke-linejoin="round"/>
<polyline points="625,782 628,784.5 640,788" fill="none" stroke="#000" stroke-width="1.1"/>
<polyline points="293,788 302,781.5 310,785.5 317,781.5 323,788" fill="none" stroke="#000" stroke-width="1.1"/>
<line x1="1042" y1="196" x2="1060" y2="199" stroke="#ffa800" stroke-width="2.800"/>
<line x1="805" y1="316.4" x2="883" y2="338.2" stroke="#ffa800" stroke-width="2.800"/>
<line x1="886" y1="316.4" x2="924" y2="316.4" stroke="#ffa800" stroke-width="2.800"/>
<line x1="886" y1="316.4" x2="883" y2="338.2" stroke="#ffa800" stroke-width="2.800"/>
<line x1="924" y1="316.4" x2="976" y2="350.2" stroke="#ffa800" stroke-width="2.800"/>
<line x1="900" y1="361.4" x2="922" y2="537" stroke="#ffa800" stroke-width="2.800"/>
<line x1="566" y1="399" x2="805" y2="316.4" stroke="#ffa800" stroke-width="2.800"/>
<line x1="539" y1="675.5" x2="599" y2="684.5" stroke="#ffa800" stroke-width="2.800"/>
<line x1="599" y1="684.5" x2="571" y2="746" stroke="#ffa800" stroke-width="2.800"/>
<line x1="883" y1="338.2" x2="900" y2="361.4" stroke="#ffa800" stroke-width="2.800"/>
<line x1="805" y1="316.4" x2="886" y2="316.4" stroke="#ffff00" stroke-width="2.800"/>
<line x1="1042" y1="196" x2="976" y2="350.2" stroke="#ffff00" stroke-width="2.800"/>
<line x1="1060" y1="199" x2="976" y2="350.2" stroke="#ffff00" stroke-width="2.800"/>
<line x1="976" y1="350.2" x2="922" y2="537" stroke="#ffff00" stroke-width="2.800"/>
<line x1="900" y1="361.4" x2="976" y2="350.2" stroke="#ffff00" stroke-width="2.800"/>
<line x1="883" y1="338.2" x2="924" y2="316.4" stroke="#ffff00" stroke-width="2.800"/>
<line x1="886" y1="316.4" x2="900" y2="361.4" stroke="#ffff00" stroke-width="2.800"/>
<line x1="883" y1="338.2" x2="900" y2="361.4" stroke="#ffff00" stroke-width="2.800"/>
<line x1="566" y1="399" x2="539" y2="675.5" stroke="#ffff00" stroke-width="2.800"/>
<line x1="539" y1="675.5" x2="571" y2="746" stroke="#ffff00" stroke-width="2.800"/>
<circle cx="1042" cy="196" r="4.300" fill="#e60000" stroke="#2a0000" stroke-width="1.1"/><circle cx="1042" cy="196" r="1" fill="#1a0000"/>
<circle cx="1060" cy="199" r="4.300" fill="#e60000" stroke="#2a0000" stroke-width="1.1"/><circle cx="1060" cy="199" r="1" fill="#1a0000"/>
<circle cx="805" cy="316.4" r="4.300" fill="#e60000" stroke="#2a0000" stroke-width="1.1"/><circle cx="805" cy="316.4" r="1" fill="#1a0000"/>
<circle cx="886" cy="316.4" r="4.300" fill="#e60000" stroke="#2a0000" stroke-width="1.1"/><circle cx="886" cy="316.4" r="1" fill="#1a0000"/>
<circle cx="924" cy="316.4" r="4.300" fill="#e60000" stroke="#2a0000" stroke-width="1.1"/><circle cx="924" cy="316.4" r="1" fill="#1a0000"/>
<circle cx="883" cy="338.2" r="4.300" fill="#e60000" stroke="#2a0000" stroke-width="1.1"/><circle cx="883" cy="338.2" r="1" fill="#1a0000"/>
<circle cx="900" cy="361.4" r="4.300" fill="#e60000" stroke="#2a0000" stroke-width="1.1"/><circle cx="900" cy="361.4" r="1" fill="#1a0000"/>
<circle cx="976" cy="350.2" r="4.300" fill="#e60000" stroke="#2a0000" stroke-width="1.1"/><circle cx="976" cy="350.2" r="1" fill="#1a0000"/>
<circle cx="566" cy="399" r="4.300" fill="#e60000" stroke="#2a0000" stroke-width="1.1"/><circle cx="566" cy="399" r="1" fill="#1a0000"/>
<circle cx="922" cy="537" r="4.300" fill="#e60000" stroke="#2a0000" stroke-width="1.1"/><circle cx="922" cy="537" r="1" fill="#1a0000"/>
<circle cx="539" cy="675.5" r="4.300" fill="#e60000" stroke="#2a0000" stroke-width="1.1"/><circle cx="539" cy="675.5" r="1" fill="#1a0000"/>
<circle cx="599" cy="684.5" r="4.300" fill="#e60000" stroke="#2a0000" stroke-width="1.1"/><circle cx="599" cy="684.5" r="1" fill="#1a0000"/>
<circle cx="571" cy="746" r="4.300" fill="#e60000" stroke="#2a0000" stroke-width="1.1"/><circle cx="571" cy="746" r="1" fill="#1a0000"/>
<g><path d="M1285 765.500 h5 l1.500 1.500 h9 v13 h-15.500z" fill="#fdfdfd" stroke="#d8d8d0" stroke-width=".6"/><path d="M1288 771.500 h10 M1288 774.500 h10" stroke="#98a0a0" stroke-width="1.4"/><rect x="1287" y="778" width="2" height="2.500" fill="#c8ccc8"/><rect x="1297" y="778" width="2" height="2.500" fill="#c8ccc8"/></g>
</svg>
<div class="a" style="left:1312px;top:153px;width:16px;height:1px;background:#646464;"></div>
<div class="a" style="left:1312px;top:154px;width:16px;height:636px;background:linear-gradient(90deg,#f6f6f6 0,#efefef 40%,#ececec 85%,#f6f6f6 100%);"></div>
<svg style="left:1312px;top:154px" width="17" height="636" viewBox="0 0 17 636"><defs>
<linearGradient id="thv" x1="0" y1="0" x2="1" y2="0"><stop offset="0" stop-color="#f8f8f8"/><stop offset=".45" stop-color="#ececec"/><stop offset=".46" stop-color="#d8d8dc"/><stop offset="1" stop-color="#c2c2c6"/></linearGradient>
<linearGradient id="thh" x1="0" y1="0" x2="0" y2="1"><stop offset="0" stop-color="#f6f6f6"/><stop offset=".45" stop-color="#ececec"/><stop offset=".46" stop-color="#d4d4d8"/><stop offset="1" stop-color="#c2c2c6"/></linearGradient>
<linearGradient id="arg" x1="0" y1="0" x2="0" y2="1"><stop offset="0" stop-color="#222"/><stop offset="1" stop-color="#777"/></linearGradient></defs>
<path d="M3.800 11 L7.400 7 L11 11Z M3.800 622 L7.400 626 L11 622Z" fill="url(#arg)"/>
<rect x="-1.500" y="162.500" width="15" height="14" rx="2" fill="url(#thv)" stroke="#979797"/><rect x="0" y="163.500" width="12.500" height="12" fill="none" stroke="#fff" stroke-opacity=".6"/></svg>
<div class="a" style="left:290px;top:790px;width:1038px;height:16px;background:#f0f0f0;"></div>
<div class="a" style="left:366px;top:790px;width:944px;height:16px;background:linear-gradient(180deg,#f4f4f4 0,#ededed 50%,#e8e8e8 90%,#f4f4f4 100%);"></div>
<svg style="left:290px;top:790px;overflow:hidden" width="1022" height="16" viewBox="0 0 1022 16">
<rect x="2" y=".5" width="12" height="10" fill="#dcdcdc" stroke="#404040" stroke-width="1"/><path d="M2.500 10 V1 H13.500" stroke="#000" stroke-width="1" fill="none"/><rect x="4.500" y="2.500" width="7" height="6" fill="#cfe6b8" stroke="#666" stroke-width=".8"/><path d="M5.500 7.500 L10.500 3.500" stroke="#8a8a6a" stroke-width=".9"/>
<path d="M20 .5 H25 L27.500 3 V10 H20Z" fill="#fff" stroke="#333" stroke-width="1"/><path d="M22 4.500 h3.500 M22 6.500 h3.500" stroke="#555" stroke-width=".9"/>
<path d="M33.500 0 V11" stroke="#8a8a8a"/>
<path d="M42.500 5 a3.500 3.500 0 0 1 6 -1.200 M49.500 6.500 a3.500 3.500 0 0 1 -6 1.200" stroke="#2a5caa" stroke-width="1.500" fill="none"/><path d="M47 1.200 l3 2.800 l-3.500 .6z M45 10.300 l-3 -2.800 l3.500 -.6z" fill="#2a5caa"/>
<path d="M58.800 1.500 V8.500 M63 1.500 V8.500" stroke="#2a5caa" stroke-width="2"/>
<path d="M87 3 L83.300 6.500 L87 10Z M1010 3 L1013.700 6.500 L1010 10Z" fill="url(#arg)"/>
<rect x="541.500" y="-1.500" width="14" height="15" rx="2" fill="url(#thh)" stroke="#979797"/><rect x="542.500" y="-.5" width="12" height="13" fill="none" stroke="#fff" stroke-opacity=".6"/>
</svg>
<div class="a" style="left:51px;top:806px;width:1277px;height:1px;background:#fdfdfd;"></div>
<div class="a" style="left:51px;top:807px;width:1277px;height:19px;background:#f0f0f0;"></div>
<div class="a" style="left:924px;top:809px;width:1px;height:16px;background:#e4e4e4;"></div><div class="a" style="left:925px;top:809px;width:1px;height:16px;background:#fafafa;"></div>
<div class="a" style="left:1050px;top:809px;width:1px;height:16px;background:#e4e4e4;"></div><div class="a" style="left:1051px;top:809px;width:1px;height:16px;background:#fafafa;"></div>
<div class="a" style="left:1055px;top:809px;width:1px;height:16px;background:#e4e4e4;"></div><div class="a" style="left:1056px;top:809px;width:1px;height:16px;background:#fafafa;"></div>
<span class="t" style="left:1076px;top:811.84px;font-size:12px;transform:scaleX(0.9159);">462593.035  5233271.654 Meters</span>
</body></html>
